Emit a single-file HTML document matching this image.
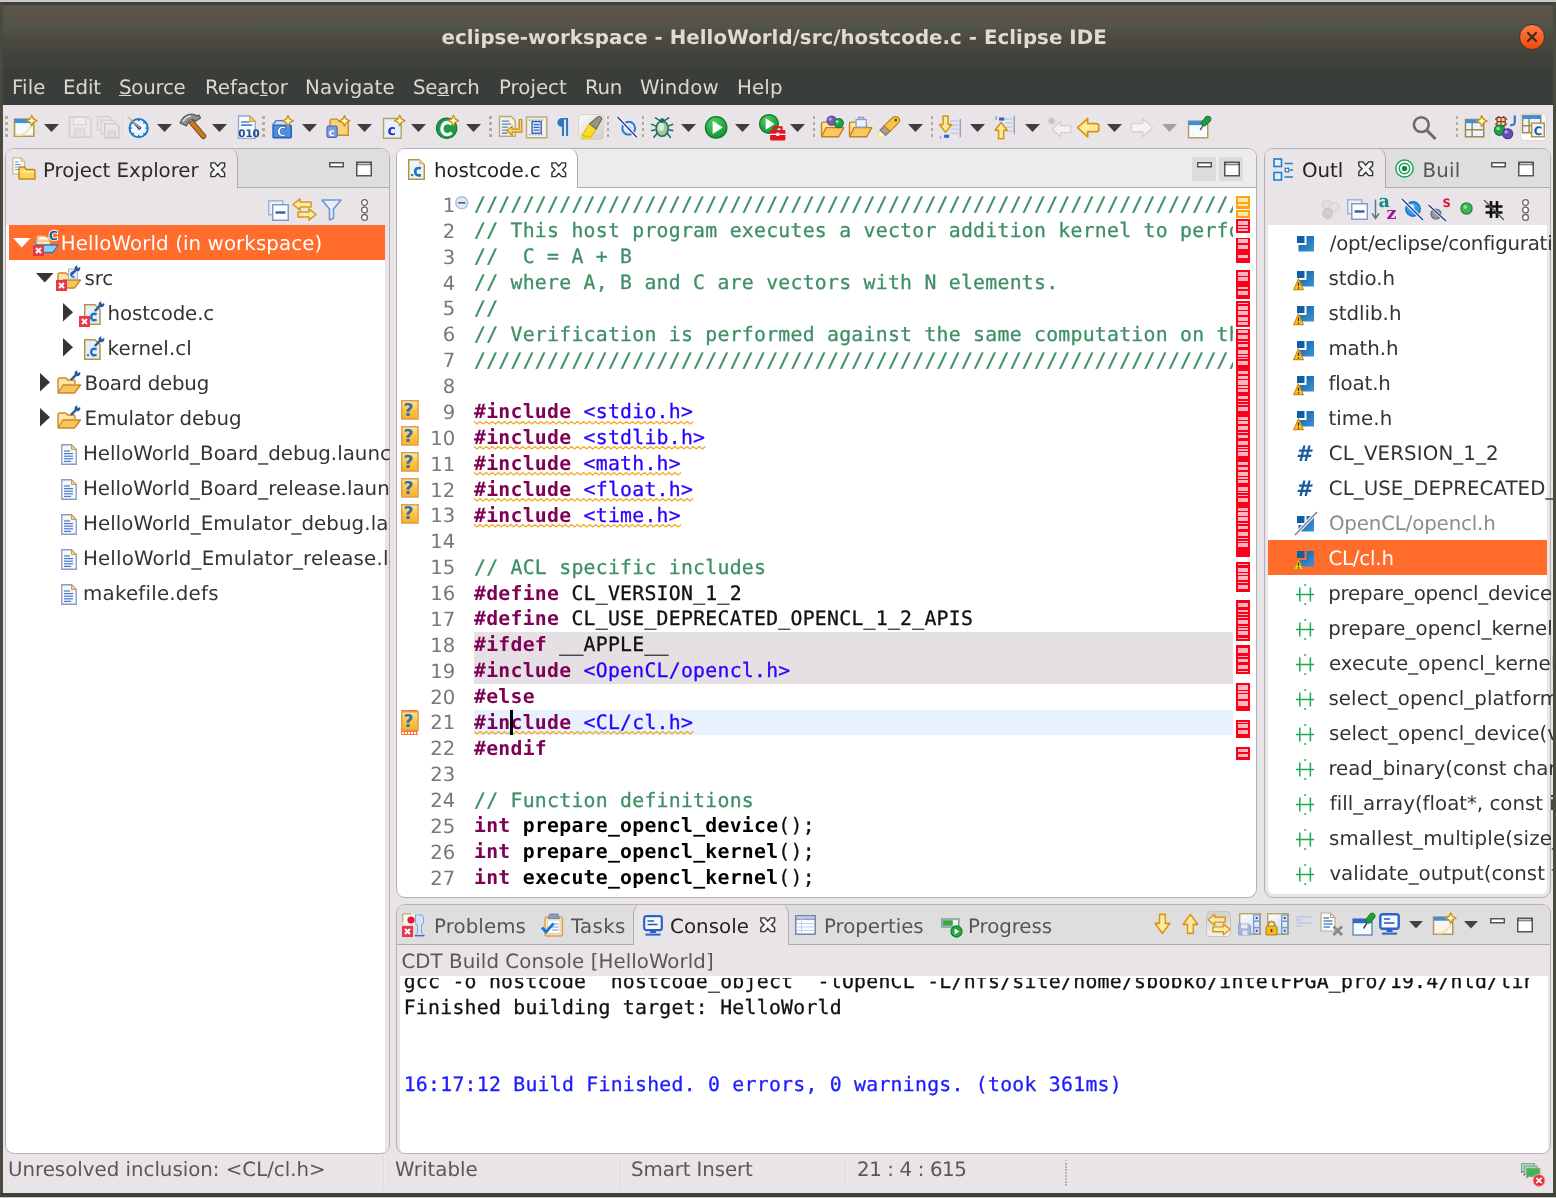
<!DOCTYPE html><html><head><meta charset='utf-8'><title>eclipse-workspace - HelloWorld/src/hostcode.c - Eclipse IDE</title><style>
*{box-sizing:border-box;margin:0;padding:0}
html,body{width:1556px;height:1198px;overflow:hidden;background:#e8e4e8;}
body{position:relative;-webkit-font-smoothing:antialiased;text-rendering:geometricPrecision;font-family:"DejaVu Sans","Liberation Sans",sans-serif;font-size:19.79px;color:#333;}
.abs{position:absolute}
.t{position:absolute;white-space:pre;line-height:1}
.mono{font-family:"DejaVu Sans Mono","Liberation Mono",monospace;font-size:19.79px;letter-spacing:0.264px;-webkit-text-stroke:0.3px currentColor}
.panel{position:absolute;border:1.5px solid #b4b0b4;border-radius:9px;background:#fff;overflow:hidden}
.hdr{position:absolute;left:0;top:0;right:0;border-bottom:1.5px solid #b4b0b4}
svg{position:absolute;overflow:visible}
</style></head><body><div id='root' style='position:absolute;left:0;top:0;width:1556px;height:1198px;will-change:transform;overflow:hidden'>
<div class='abs' style='left:0;top:0;width:1556px;height:2px;background:#c9c9c9'></div>
<div class='abs' style='left:0;top:1.7px;width:1556px;height:3px;background:#3e4136'></div>
<div class='abs' style='left:0;top:4.5px;width:1556px;height:62.5px;background:linear-gradient(#57564a 0%,#5a5347 18%,#51544b 35%,#4d4a42 52%,#464740 68%,#40413b 86%,#443f3a 100%)'></div>
<div class='t' style='left:441.55px;top:27.6px;font-weight:bold;color:#dfdbd2;font-size:19.79px;letter-spacing:0.036px'>eclipse-workspace - HelloWorld/src/hostcode.c - Eclipse IDE</div>
<div class='abs' style='left:1518.5px;top:23.5px;width:26px;height:26px;border-radius:50%;background:linear-gradient(#ff7a4a,#f14a08);border:1px solid #3a3a30'></div>
<svg style='left:1518.5px;top:23.5px' width='26' height='26' viewBox='0 0 26 26'><path d='M9 9 L17 17 M17 9 L9 17' stroke='#3a2a1a' stroke-width='2.2' stroke-linecap='round'/></svg>
<div class='abs' style='left:0;top:66.8px;width:1556px;height:38px;background:#393e3b'></div>
<div class='t' style='left:12px;top:78.3px;color:#dcd8d0;font-size:19.79px;letter-spacing:0.114px'>File</div>
<div class='t' style='left:63px;top:78.3px;color:#dcd8d0;font-size:19.79px;letter-spacing:-0.067px'>Edit</div>
<div class='t' style='left:119px;top:78.3px;color:#dcd8d0;font-size:19.79px;letter-spacing:-0.237px'><u>S</u>ource</div>
<div class='t' style='left:205px;top:78.3px;color:#dcd8d0;font-size:19.79px;letter-spacing:-0.022px'>Refac<u>t</u>or</div>
<div class='t' style='left:305px;top:78.3px;color:#dcd8d0;font-size:19.79px;letter-spacing:0.131px'>Navigate</div>
<div class='t' style='left:413px;top:78.3px;color:#dcd8d0;font-size:19.79px;letter-spacing:-0.240px'>Se<u>a</u>rch</div>
<div class='t' style='left:499px;top:78.3px;color:#dcd8d0;font-size:19.79px;letter-spacing:0.002px'>Project</div>
<div class='t' style='left:585px;top:78.3px;color:#dcd8d0;font-size:19.79px;letter-spacing:-0.259px'>Run</div>
<div class='t' style='left:640px;top:78.3px;color:#dcd8d0;font-size:19.79px;letter-spacing:0.116px'>Window</div>
<div class='t' style='left:737px;top:78.3px;color:#dcd8d0;font-size:19.79px;letter-spacing:0.138px'>Help</div>
<div class='abs' style='left:0;top:104.5px;width:1556px;height:1090px;background:#e8e4e8'></div>
<div class='abs' style='left:5.1px;top:115.5px;width:2.6px;height:23px;background:repeating-linear-gradient(#b3ab98 0 2.6px,transparent 2.6px 6.1px)'></div>
<svg style='left:13px;top:114.5px' width='24.3' height='24.3' viewBox='0 0 24 24' ><rect x='1.5' y='4' width='19' height='17' fill='#f4f9ff' stroke='#b9984a' stroke-width='1.5'/><rect x='1.5' y='4' width='19' height='4' fill='#3a8ee0'/><path d='M4 20 Q14 20 18 10' fill='none' stroke='#f5e3a8' stroke-width='2'/><path d='M18.5 0.2999999999999998 L20.164 3.836 L23.7 5.5 L20.164 7.164 L18.5 10.7 L16.836 7.164 L13.3 5.5 L16.836 3.836 Z' fill='#fff7d0' stroke='#c8940f' stroke-width='1.3' stroke-linejoin='round'/></svg>
<svg style='left:44px;top:123.5px' width='15' height='8' viewBox='0 0 15 8' ><path d='M0 0 H15 L7.5 8 Z' fill='#3f3f3f'/></svg>
<svg style='left:67.5px;top:114.5px' width='24.3' height='24.3' viewBox='0 0 24 24' ><path d='M1.5 2 H20 L22.5 4.5 V22 H1.5 Z' fill='#ebe6ea' stroke='#d4ccd2' stroke-width='1.4'/><rect x='5.5' y='2.5' width='12' height='7' fill='#f1edf0' stroke='#d8d0d6'/><rect x='6.5' y='14' width='10' height='8' fill='#e4dfe3' stroke='#d4ccd2'/></svg>
<svg style='left:95.5px;top:114.5px' width='24.3' height='24.3' viewBox='0 0 24 24' ><path d='M1.5 1.5 H13 L15 3.5 V15 H1.5 Z' fill='#ebe6ea' stroke='#d4ccd2' stroke-width='1.2'/><path d='M5 5 H16.5 L18.5 7 V18.5 H5 Z' fill='#ebe6ea' stroke='#d4ccd2' stroke-width='1.2'/><path d='M8.5 8.5 H20 L22.5 11 V22.5 H8.5 Z' fill='#ebe6ea' stroke='#d0c8ce' stroke-width='1.3'/><rect x='12' y='16' width='7' height='6.5' fill='#e2dce0' stroke='#d0c8ce'/></svg>
<div class='abs' style='left:121.5px;top:113px;width:1.3px;height:28px;background:#e1dbdc'></div>
<svg style='left:126px;top:114.5px' width='24.3' height='24.3' viewBox='0 0 24 24' ><circle cx='12.5' cy='13' r='9' fill='#f2f8ff' stroke='#1f7ac8' stroke-width='2'/><path d='M12.5 4 V6.5 M12.5 19.5 V22 M3.5 13 H6 M19 13 H21.5 M6 6.5 L7.8 8.3 M19 6.5 L17.2 8.3 M6 19.5 L7.8 17.7 M19 19.5 L17.2 17.7' stroke='#1f7ac8' stroke-width='1.4'/><path d='M2 2 L13 15 L15.5 12.5 Z' fill='#1d3f8c'/><path d='M2 2 L14 13' stroke='#e8c860' stroke-width='1'/></svg>
<svg style='left:157px;top:123.5px' width='15' height='8' viewBox='0 0 15 8' ><path d='M0 0 H15 L7.5 8 Z' fill='#3f3f3f'/></svg>
<svg style='left:178px;top:112px' width='29' height='29' viewBox='0 0 29 29' ><path d='M11 11 L24 26 Q26 27.5 27.5 25.5 Q28.5 24 27 22.5 L15 8 Z' fill='#c4782a' stroke='#8a4e14' stroke-width='1.1'/><path d='M2 11 Q5 3 13 2 Q17 2 19 4 L21 3 L22.5 6 L17 9.5 L15 7.5 Q12 7 10.5 10 L8.5 14 Z' fill='#8d8d8d' stroke='#555' stroke-width='1.1' stroke-linejoin='round'/><path d='M5 9.5 Q8 4.5 13 4' stroke='#d8d8d8' stroke-width='1.6' fill='none'/></svg>
<svg style='left:212px;top:123.5px' width='15' height='8' viewBox='0 0 15 8' ><path d='M0 0 H15 L7.5 8 Z' fill='#3f3f3f'/></svg>
<svg style='left:236px;top:114.5px' width='24.3' height='24.3' viewBox='0 0 24 24' ><path d='M2.5 1 H13.5 L19 6.5 V23 H2.5 Z' fill='#f6f9fe' stroke='#9ca9c6' stroke-width='1.3'/><path d='M13.5 1 V6.5 H19 Z' fill='#eed58c' stroke='#c8a040' stroke-width='1'/><path d='M5 7 H13 M5 10 H16' stroke='#5a84cc' stroke-width='1.5'/><text x='2.2' y='21.5' font-family='DejaVu Sans, Liberation Sans, sans-serif' font-weight='bold' font-size='10.2' fill='#1f4e96'>010</text></svg>
<div class='abs' style='left:262.3px;top:115.5px;width:2.6px;height:23px;background:repeating-linear-gradient(#b3ab98 0 2.6px,transparent 2.6px 6.1px)'></div>
<svg style='left:270px;top:114.5px' width='24.3' height='24.3' viewBox='0 0 24 24' ><path d='M2.5 10 L6 5.5 H16 L19.5 10' fill='#cfe0f8' stroke='#4a78c8' stroke-width='1.3'/><rect x='3' y='10' width='18' height='12.5' rx='1' fill='#4a8fe8' stroke='#2a5cb8' stroke-width='1.4'/><text x='7' y='20.8' font-family='DejaVu Sans, Liberation Sans, sans-serif' font-weight='bold' font-size='12.5' fill='#fff' stroke='#1d4a9a' stroke-width='0.5'>C</text><path d='M17.8 0.5999999999999996 L19.464000000000002 4.135999999999999 L23.0 5.8 L19.464000000000002 7.464 L17.8 11.0 L16.136 7.464 L12.600000000000001 5.8 L16.136 4.135999999999999 Z' fill='#fff7d0' stroke='#c8940f' stroke-width='1.3' stroke-linejoin='round'/></svg>
<svg style='left:302px;top:123.5px' width='15' height='8' viewBox='0 0 15 8' ><path d='M0 0 H15 L7.5 8 Z' fill='#3f3f3f'/></svg>
<svg style='left:325.5px;top:114.5px' width='24.3' height='24.3' viewBox='0 0 24 24' ><path d='M4 20 V6 Q4 4 6 4 H11 L13 6.5 H20 Q22 6.5 22 8.5 V20 Z' fill='#f8d27a' stroke='#c88a2a' stroke-width='1.3'/><rect x='1' y='11' width='10' height='11' rx='1.5' fill='#7a9ee0' stroke='#4a6cb8' stroke-width='1.2'/><text x='2.8' y='20.3' font-family='DejaVu Sans, Liberation Sans, sans-serif' font-weight='bold' font-size='10' fill='#fff'>c</text><path d='M18.3 0.5999999999999996 L19.964000000000002 4.135999999999999 L23.5 5.8 L19.964000000000002 7.464 L18.3 11.0 L16.636 7.464 L13.100000000000001 5.8 L16.636 4.135999999999999 Z' fill='#fff7d0' stroke='#c8940f' stroke-width='1.3' stroke-linejoin='round'/></svg>
<svg style='left:357px;top:123.5px' width='15' height='8' viewBox='0 0 15 8' ><path d='M0 0 H15 L7.5 8 Z' fill='#3f3f3f'/></svg>
<svg style='left:381.5px;top:114.5px' width='24.3' height='24.3' viewBox='0 0 24 24' ><path d='M1.5 3.5 H19 V23 H1.5 Z' fill='#e8effc' stroke='#b8a060' stroke-width='1.4'/><text x='5.5' y='19.5' font-family='DejaVu Sans, Liberation Sans, sans-serif' font-weight='bold' font-size='14' fill='#2a35c0'>c</text><path d='M17.5 0.2999999999999998 L19.164 3.836 L22.7 5.5 L19.164 7.164 L17.5 10.7 L15.836 7.164 L12.3 5.5 L15.836 3.836 Z' fill='#fff7d0' stroke='#c8940f' stroke-width='1.3' stroke-linejoin='round'/></svg>
<svg style='left:411px;top:123.5px' width='15' height='8' viewBox='0 0 15 8' ><path d='M0 0 H15 L7.5 8 Z' fill='#3f3f3f'/></svg>
<svg style='left:434.5px;top:114.5px' width='24.3' height='24.3' viewBox='0 0 24 24' ><circle cx='11.5' cy='13' r='10' fill='#1f9a4a' stroke='#0f7a34' stroke-width='1.2'/><path d='M16.5 9 Q11 5.5 7.8 10 Q5.5 14.5 8.5 18 Q12 21 16.5 17.5' fill='none' stroke='#fff' stroke-width='3.2'/><path d='M18.2 0.2999999999999998 L19.864 3.836 L23.4 5.5 L19.864 7.164 L18.2 10.7 L16.535999999999998 7.164 L13.0 5.5 L16.535999999999998 3.836 Z' fill='#fff7d0' stroke='#c8940f' stroke-width='1.3' stroke-linejoin='round'/></svg>
<svg style='left:466px;top:123.5px' width='15' height='8' viewBox='0 0 15 8' ><path d='M0 0 H15 L7.5 8 Z' fill='#3f3f3f'/></svg>
<div class='abs' style='left:489.40000000000003px;top:115.5px;width:2.6px;height:23px;background:repeating-linear-gradient(#b3ab98 0 2.6px,transparent 2.6px 6.1px)'></div>
<svg style='left:497.5px;top:114.5px' width='24.3' height='24.3' viewBox='0 0 24 24' ><path d='M1.5 1.5 H13 L17 5.5 V21 H1.5 Z' fill='#f4f2e6' stroke='#b8a878' stroke-width='1.3'/><path d='M4 6 H11 M4 9 H13 M4 12 H10 M4 15 H9 M4 18 H9' stroke='#5a84cc' stroke-width='1.3'/><path d='M21 4.5 V14 H14 V11 L8.5 15.5 L14 20 V17 H23.5 V4.5 Z' fill='#f9d66a' stroke='#c88a1a' stroke-width='1.2' stroke-linejoin='round'/></svg>
<svg style='left:524.5px;top:114.5px' width='24.3' height='24.3' viewBox='0 0 24 24' ><rect x='1.5' y='2' width='20' height='20.5' fill='#f4f2e6' stroke='#b8a878' stroke-width='1.4'/><path d='M4 5 H19 M4 19.5 H19' stroke='#5a84cc' stroke-width='1.2' stroke-dasharray='1.5 1.5'/><rect x='7' y='6.5' width='9' height='11.5' fill='#dfe9fb' stroke='#3a64c0' stroke-width='1.4'/><path d='M8.5 9.5 H14.5 M8.5 12.2 H14.5 M8.5 15 H14.5' stroke='#3a64c0' stroke-width='1.3'/></svg>
<div class='t' style='left:556px;top:117px;font-size:22px;font-weight:bold;color:#2f77c8'>&#182;</div>
<div class='abs' style='left:577.5px;top:113.5px;width:26px;height:26.5px;border-radius:4px;background:linear-gradient(135deg,#fbfaf8,#d2cec6);border:1px solid #d8d4cc'></div>
<svg style='left:578.5px;top:114.5px' width='24.3' height='24.3' viewBox='0 0 24 24' ><path d='M3 20.5 L10 9 L17 14 L12 21.5 Z' fill='#f8e02a' stroke='#d4b800' stroke-width='1'/><path d='M2 22.5 H13' stroke='#f2d800' stroke-width='2'/><path d='M10.5 8.5 L19 1.5 Q22 1 22.5 4 L17 14 Z' fill='#9a9484' stroke='#6e6a5c' stroke-width='1'/></svg>
<div class='abs' style='left:606.5999999999999px;top:115.5px;width:2.6px;height:23px;background:repeating-linear-gradient(#b3ab98 0 2.6px,transparent 2.6px 6.1px)'></div>
<svg style='left:614.5px;top:114.5px' width='24.3' height='24.3' viewBox='0 0 24 24' ><circle cx='13.5' cy='13' r='6.3' fill='#dcecfb' stroke='#2a7cc8' stroke-width='2'/><circle cx='13.5' cy='13' r='2.2' fill='#5aa4e4'/><path d='M2.5 2 L21.5 22' stroke='#fff' stroke-width='3.4'/><path d='M2.5 2 L21.5 22' stroke='#3440a8' stroke-width='1.6'/></svg>
<div class='abs' style='left:641.5999999999999px;top:115.5px;width:2.6px;height:23px;background:repeating-linear-gradient(#b3ab98 0 2.6px,transparent 2.6px 6.1px)'></div>
<svg style='left:649.5px;top:114.5px' width='24.3' height='24.3' viewBox='0 0 24 24' ><path d='M12 7 L5 2.5 M12 7 L19 2.5 M6 11 L1 9 M18 11 L23 9 M5.5 14.5 L1 15.5 M18.5 14.5 L23 15.5 M7 18 L3.5 22.5 M17 18 L20.5 22.5' stroke='#1c6a64' stroke-width='1.5'/><ellipse cx='12' cy='13.5' rx='6' ry='7.5' fill='#9cc8a0' stroke='#1c6a64' stroke-width='1.5'/><ellipse cx='11' cy='12' rx='3' ry='4' fill='#d8ecd4'/><circle cx='12' cy='5.5' r='2.4' fill='#1c6a64'/></svg>
<svg style='left:681px;top:123.5px' width='15' height='8' viewBox='0 0 15 8' ><path d='M0 0 H15 L7.5 8 Z' fill='#3f3f3f'/></svg>
<svg style='left:704px;top:114.5px' width='24.3' height='24.3' viewBox='0 0 24 24' ><defs><radialGradient id='rg' cx='0.4' cy='0.3' r='0.8'><stop offset='0' stop-color='#4fd06a'/><stop offset='1' stop-color='#0f8a2c'/></radialGradient></defs><circle cx='12' cy='12.3' r='10.6' fill='url(#rg)' stroke='#0f7a28' stroke-width='1.2'/><path d='M8.5 5.8 L18.5 12.3 L8.5 18.8 Z' fill='#fff'/></svg>
<svg style='left:735px;top:123.5px' width='15' height='8' viewBox='0 0 15 8' ><path d='M0 0 H15 L7.5 8 Z' fill='#3f3f3f'/></svg>
<svg style='left:757.5px;top:112.5px' width='26.3' height='26.3' viewBox='0 0 24 24' ><circle cx='10' cy='10' r='8.6' fill='url(#rg)' stroke='#0f7a28' stroke-width='1.1'/><path d='M7 4.8 L15 10 L7 15.2 Z' fill='#fff'/><rect x='11' y='15.5' width='14' height='9.5' rx='1' fill='#e8121c'/><path d='M14.5 15.5 V13 H21.5 V15.5' fill='none' stroke='#e8121c' stroke-width='1.8'/><path d='M11 19.5 H25' stroke='#fff' stroke-width='1.2'/><rect x='16.7' y='18' width='2.6' height='3' fill='#fff'/></svg>
<svg style='left:790px;top:123.5px' width='15' height='8' viewBox='0 0 15 8' ><path d='M0 0 H15 L7.5 8 Z' fill='#3f3f3f'/></svg>
<div class='abs' style='left:812.8px;top:115.5px;width:2.6px;height:23px;background:repeating-linear-gradient(#b3ab98 0 2.6px,transparent 2.6px 6.1px)'></div>
<svg style='left:820px;top:114.5px' width='24.3' height='24.3' viewBox='0 0 24 24' ><path d='M1.5 21 V8.5 Q1.5 7 3 7 H8 L10 9 H17 Q18.5 9 18.5 10.5 V12' fill='#fbe4a4' stroke='#c8821a' stroke-width='1.4'/><path d='M1.5 21.5 L6 12.5 H23.5 L18.5 21.5 Z' fill='#f9c862' stroke='#c8821a' stroke-width='1.4' stroke-linejoin='round'/><circle cx='11.5' cy='5.5' r='4.6' fill='#7a5cc0' stroke='#5a3ca0'/><circle cx='10' cy='4' r='1.6' fill='#b8a4e8'/><circle cx='18.5' cy='8' r='4.6' fill='#1fa04a' stroke='#0f7a34'/><circle cx='17' cy='6.5' r='1.6' fill='#8ae0a0'/></svg>
<svg style='left:847.5px;top:114.5px' width='24.3' height='24.3' viewBox='0 0 24 24' ><path d='M1.5 21 V8.5 Q1.5 7 3 7 H8 L10 9 H17 Q18.5 9 18.5 10.5 V12' fill='#fbe4a4' stroke='#c8821a' stroke-width='1.4'/><path d='M1.5 21.5 L6 12.5 H23.5 L18.5 21.5 Z' fill='#f9c862' stroke='#c8821a' stroke-width='1.4' stroke-linejoin='round'/><rect x='8' y='4.5' width='10' height='7.5' fill='#eef2fb' stroke='#8a9cc8' stroke-width='1.2'/><path d='M10.5 4.5 V2.5 H15.5 V4.5' fill='none' stroke='#8a9cc8' stroke-width='1.3'/></svg>
<svg style='left:875.5px;top:114.5px' width='24.3' height='24.3' viewBox='0 0 24 24' ><path d='M1 23 L4 15 L9.5 20 Z' fill='#fff8c8' stroke='#f0e08a' stroke-width='1'/><path d='M4 15 L8 10.5 L14 16 L9.5 20 Z' fill='#a8a098' stroke='#78706a' stroke-width='1'/><path d='M8 10.5 L17 2 Q21 0.5 23 3.5 Q24 6 22 8 L14 16 Z' fill='#f8c44a' stroke='#c8860f' stroke-width='1.2'/><circle cx='19.5' cy='5' r='1.5' fill='#7a5a10'/></svg>
<svg style='left:907.5px;top:123.5px' width='15' height='8' viewBox='0 0 15 8' ><path d='M0 0 H15 L7.5 8 Z' fill='#3f3f3f'/></svg>
<div class='abs' style='left:930.8px;top:115.5px;width:2.6px;height:23px;background:repeating-linear-gradient(#b3ab98 0 2.6px,transparent 2.6px 6.1px)'></div>
<svg style='left:938px;top:114.5px' width='24.3' height='24.3' viewBox='0 0 24 24' ><path d='M12 6 H20 M13 10 H20 M13 14 H20 M12 18 H20' stroke='#c0cce8' stroke-width='1.5'/><path d='M22 4 V22' stroke='#8a9cc0' stroke-width='1.3'/><rect x='6' y='19.5' width='5' height='3' fill='#2a64c0'/><path d='M2.5 21 V23.5' stroke='#8a9cc0' stroke-width='1.2'/><path d='M5 1 H10 V9.5 H13.5 L7.5 17 L1.5 9.5 H5 Z' fill='#ffe9a0' stroke='#d8940f' stroke-width='1.5' stroke-linejoin='round'/></svg>
<svg style='left:970px;top:123.5px' width='15' height='8' viewBox='0 0 15 8' ><path d='M0 0 H15 L7.5 8 Z' fill='#3f3f3f'/></svg>
<svg style='left:993px;top:114.5px' width='24.3' height='24.3' viewBox='0 0 24 24' ><path d='M11 4 H19 M12 8 H19 M12 12 H19 M11 16 H19' stroke='#c0cce8' stroke-width='1.5'/><path d='M21 1 V19 M3 1 V5' stroke='#8a9cc0' stroke-width='1.3'/><rect x='6' y='2.5' width='5' height='3' fill='#2a64c0'/><path d='M5.5 23.5 H10.5 V15 H14 L8 7.5 L2 15 H5.5 Z' fill='#ffe9a0' stroke='#d8940f' stroke-width='1.5' stroke-linejoin='round'/></svg>
<svg style='left:1024.5px;top:123.5px' width='15' height='8' viewBox='0 0 15 8' ><path d='M0 0 H15 L7.5 8 Z' fill='#3f3f3f'/></svg>
<svg style='left:1046.5px;top:114.5px' width='24.3' height='24.3' viewBox='0 0 24 24' ><path d='M4.5 2 V10 M0.8 6 H8.2 M1.8 3.2 L7.2 8.8 M7.2 3.2 L1.8 8.8' stroke='#c4bec4' stroke-width='1.1'/><path d='M5 14 L13.5 6.5 V10.5 H23.5 V17.5 H13.5 V21.5 Z' fill='#f4f1f4' stroke='#d4cfd4' stroke-width='1.3' stroke-linejoin='round'/></svg>
<svg style='left:1075.5px;top:114.5px' width='24.3' height='24.3' viewBox='0 0 24 24' ><path d='M1.5 12.5 L11.5 3.5 V8.5 H20 Q22.5 8.5 22.5 11 V14 Q22.5 16.5 20 16.5 H11.5 V21.5 Z' fill='#ffeaa0' stroke='#d8940f' stroke-width='1.7' stroke-linejoin='round'/></svg>
<svg style='left:1106.7px;top:123.5px' width='15' height='8' viewBox='0 0 15 8' ><path d='M0 0 H15 L7.5 8 Z' fill='#3f3f3f'/></svg>
<svg style='left:1130px;top:114.5px' width='24.3' height='24.3' viewBox='0 0 24 24' ><path d='M22.5 12.5 L12.5 3.5 V8.5 H3 Q1.5 8.5 1.5 10 V15 Q1.5 16.5 3 16.5 H12.5 V21.5 Z' fill='#f6f3f6' stroke='#d6d1d6' stroke-width='1.4' stroke-linejoin='round'/></svg>
<svg style='left:1161.6px;top:123.5px' width='15' height='8' viewBox='0 0 15 8' ><path d='M0 0 H15 L7.5 8 Z' fill='#a5a09a'/></svg>
<svg style='left:1186.5px;top:114.5px' width='24.3' height='24.3' viewBox='0 0 24 24' ><rect x='1.5' y='6' width='19' height='16.5' fill='#f6fbff' stroke='#b09858' stroke-width='1.4'/><rect x='1.5' y='6' width='19' height='4' fill='#3a8ee0'/><path d='M13 15 L16 10' stroke='#555' stroke-width='1.4'/><path d='M14 8 L19 1.5 Q22 0.5 23.5 3 Q24 5 22.5 6.5 L17 11 Z' fill='#1fa03a' stroke='#0f7a24' stroke-width='1'/></svg>
<svg style='left:1410px;top:113px' width='30' height='30' viewBox='0 0 30 30' ><circle cx='11.3' cy='11.6' r='7.4' fill='none' stroke='#6c6c6c' stroke-width='2.6'/><path d='M16.8 17.2 L25.5 26' stroke='#6c6c6c' stroke-width='3' stroke-linecap='butt'/></svg>
<div class='abs' style='left:1455.8px;top:115.5px;width:2.6px;height:23px;background:repeating-linear-gradient(#b3ab98 0 2.6px,transparent 2.6px 6.1px)'></div>
<svg style='left:1464px;top:114.5px' width='24.3' height='24.3' viewBox='0 0 24 24' ><rect x='1.5' y='4.5' width='18' height='17' fill='#eaf4fe' stroke='#a08a4a' stroke-width='1.5'/><rect x='1.5' y='4.5' width='18' height='3.6' fill='#3a8ee0'/><path d='M8 8 V21.5 M1.5 14.5 H19.5' stroke='#a08a4a' stroke-width='1.5'/><path d='M17.5 0.5999999999999996 L19.228 4.272 L22.9 6 L19.228 7.728 L17.5 11.4 L15.772 7.728 L12.1 6 L15.772 4.272 Z' fill='#fff7d0' stroke='#c8940f' stroke-width='1.3' stroke-linejoin='round'/></svg>
<div class='abs' style='left:1489px;top:113px;width:1.3px;height:28px;background:#e1dbdc'></div>
<svg style='left:1492.5px;top:114.0px' width='24.3' height='24.3' viewBox='0 0 24 24' ><path d='M5.5 2 V13 M10.5 2 V13 M2 5 H14 M2 10 H14' stroke='#8a3a2a' stroke-width='1.4'/><rect x='4' y='3.5' width='8' height='8' fill='#f4d8a0' stroke='#8a3a2a' stroke-width='1.2'/><path d='M8 3.5 V11.5 M4 7.5 H12' stroke='#8a3a2a' stroke-width='1.1'/><path d='M21.5 1.5 V8 Q21.5 11.5 17 11' fill='none' stroke='#2a7cc8' stroke-width='2.2'/><circle cx='6.5' cy='16' r='5.2' fill='#1fa04a' stroke='#0f7a34'/><circle cx='5' cy='14.3' r='1.8' fill='#8ae0a0'/><circle cx='14.5' cy='19.5' r='5' fill='#6a4cb8' stroke='#4a2c98'/><circle cx='13' cy='17.8' r='1.7' fill='#b8a4e8'/></svg>
<div class='abs' style='left:1520px;top:112.5px;width:27px;height:28px;border-radius:5px;background:linear-gradient(#f8f6f8,#fff);border:1px solid #dcd6dc'></div>
<svg style='left:1521px;top:113.5px' width='24.3' height='24.3' viewBox='0 0 24 24' ><rect x='1.5' y='1.5' width='18' height='17' fill='#eaf4fe' stroke='#a08a4a' stroke-width='1.5'/><rect x='1.5' y='1.5' width='18' height='3.4' fill='#3a8ee0'/><path d='M8 5 V18.5 M1.5 11.5 H19.5' stroke='#a08a4a' stroke-width='1.5'/><rect x='10.5' y='9' width='12.5' height='13.5' fill='#f2f6fd' stroke='#b09040' stroke-width='1.4'/><text x='12.6' y='20.3' font-family='DejaVu Sans, Liberation Sans, sans-serif' font-weight='bold' font-size='11.5' fill='#1f5fa8'>C</text></svg>
<div class='panel' style='left:4.9px;top:148px;width:385.1px;height:1005.5px;background:#fff'>
<div class='abs' style='left:0;top:0;width:100%;height:39.2px;background:#dedede;border-bottom:1.5px solid #aeaaae'></div>
<div class='abs' style='left:-2px;top:-2px;width:234px;height:41.2px;background:#e8e4e8;border-right:1.5px solid #aeaaae;border-bottom-right-radius:0;border-top-right-radius:12px'></div>
<div class='abs' style='left:0;top:39.2px;width:100%;height:36.5px;background:#e8e4e8'></div>
<div class='abs' style='left:378.7px;top:75.7px;width:5px;height:940px;background:#e8e4e8'></div>
</div>
<div class='t' style='left:43.00px;top:161px;color:#2b2b2b;letter-spacing:-0.051px;font-size:19.79px;'>Project Explorer</div>
<svg style='left:210.2px;top:161.8px' width='15.5' height='15.5' viewBox='0 0 17 17' ><path d='M1 1 H5.4 L8.5 4.6 L11.6 1 H16 V5.2 L12.6 8.5 L16 11.8 V16 H11.6 L8.5 12.4 L5.4 16 H1 V11.8 L4.4 8.5 L1 5.2 Z' fill='#fff' fill-opacity='0.55' stroke='#333333' stroke-width='1.55' stroke-linejoin='miter'/></svg>
<svg style='left:329px;top:162px' width='15' height='6' viewBox='0 0 15 6' ><rect x='0.75' y='0.75' width='13.5' height='4' fill='#fff' stroke='#555' stroke-width='1.5'/></svg><svg style='left:356px;top:161px' width='16' height='16' viewBox='0 0 16 15' ><rect x='0.75' y='0.75' width='14.5' height='13.5' fill='#fff' stroke='#555' stroke-width='1.5'/><rect x='0.75' y='0.75' width='14.5' height='3' fill='#555'/><rect x='2' y='1.8' width='12' height='1' fill='#fff'/></svg>
<svg style='left:268px;top:199.5px' width='21' height='21' viewBox='0 0 21 21' ><rect x='0.75' y='0.75' width='14' height='14' fill='#e9f0fa' stroke='#9fb4d6' stroke-width='1.5'/><rect x='4.75' y='4.75' width='15.5' height='15.5' fill='#fff' stroke='#7f9ccb' stroke-width='1.5'/><path d='M7.5 12.5 H17.5' stroke='#2f5fae' stroke-width='2.4'/></svg>
<svg style='left:292px;top:197.5px' width='25' height='23' viewBox='0 0 25 23' ><path d='M1 6.5 L8 0.8 V4 H19 V9 H8 V12.2 Z' fill='#fbe9a6' stroke='#d49a1a' stroke-width='1.5' stroke-linejoin='round'/><path d='M24 16.5 L17 10.8 V14 H6 V19 H17 V22.2 Z' fill='#fbe9a6' stroke='#d49a1a' stroke-width='1.5' stroke-linejoin='round'/></svg>
<svg style='left:321px;top:199px' width='21' height='22' viewBox='0 0 21 22' ><path d='M1 1 H20 L12.5 10 V19 L8.5 21 V10 Z' fill='#e8f1fb' stroke='#6f97cf' stroke-width='1.6' stroke-linejoin='round'/></svg>
<svg style='left:359.5px;top:198.5px' width='9' height='22' viewBox='0 0 9 22' ><circle cx='4.5' cy='3.6' r='2.9' fill='#fff' stroke='#666' stroke-width='1.3'/><circle cx='4.5' cy='11' r='2.9' fill='#fff' stroke='#666' stroke-width='1.3'/><circle cx='4.5' cy='18.4' r='2.9' fill='#fff' stroke='#666' stroke-width='1.3'/></svg>
<div class='abs' style='left:7px;top:225.2px;width:383px;height:926px;overflow:hidden'>
<div class='abs' style='left:2px;top:0;width:376px;height:35.01px;background:#ff6c2c'></div>
<div class='t' style='left:53.86px;top:0.7px;color:#fff;letter-spacing:0.107px;font-size:19.79px;line-height:35.01px;'>HelloWorld (in workspace)</div>
<div class='t' style='left:77.60px;top:35.71px;color:#333333;letter-spacing:-0.135px;font-size:19.79px;line-height:35.01px;'>src</div>
<div class='t' style='left:100.60px;top:70.72px;color:#333333;letter-spacing:-0.106px;font-size:19.79px;line-height:35.01px;'>hostcode.c</div>
<div class='t' style='left:100.60px;top:105.73px;color:#333333;letter-spacing:0.066px;font-size:19.79px;line-height:35.01px;'>kernel.cl</div>
<div class='t' style='left:77.60px;top:140.73999999999998px;color:#333333;letter-spacing:-0.216px;font-size:19.79px;line-height:35.01px;'>Board debug</div>
<div class='t' style='left:77.60px;top:175.74999999999997px;color:#333333;letter-spacing:-0.132px;font-size:19.79px;line-height:35.01px;'>Emulator debug</div>
<div class='t' style='left:75.96px;top:210.76px;color:#333333;letter-spacing:0.034px;font-size:19.79px;line-height:35.01px;'>HelloWorld_Board_debug.launch</div>
<div class='t' style='left:75.96px;top:245.76999999999998px;color:#333333;letter-spacing:0.033px;font-size:19.79px;line-height:35.01px;'>HelloWorld_Board_release.launch</div>
<div class='t' style='left:75.96px;top:280.78px;color:#333333;letter-spacing:0.096px;font-size:19.79px;line-height:35.01px;'>HelloWorld_Emulator_debug.launch</div>
<div class='t' style='left:75.96px;top:315.78999999999996px;color:#333333;letter-spacing:0.179px;font-size:19.79px;line-height:35.01px;'>HelloWorld_Emulator_release.launch</div>
<div class='t' style='left:76.10px;top:350.79999999999995px;color:#333333;letter-spacing:0.224px;font-size:19.79px;line-height:35.01px;'>makefile.defs</div>
</div>
<svg style='left:12.5px;top:238.2px' width='17.5' height='9.5' viewBox='0 0 17.5 9.5' ><path d='M0 0 H17.5 L8.75 9.5 Z' fill='#fff'/></svg>
<svg style='left:33px;top:232.2px' width='26' height='22' viewBox='0 0 26 22' ><path d='M4 9 V5.5 Q4 4 5.5 4 H12 L13.5 5.5 H16 V9' fill='#fbe7ae' stroke='#d9b66a' stroke-width='1.2'/><rect x='7' y='5.5' width='7' height='1.5' fill='#fff'/><path d='M2 9 H17 V13 H2 Z' fill='#fbe7ae' stroke='#d9b66a' stroke-width='1'/><path d='M3 13 H25 L20 20.5 H7 Z' fill='#8fd0f7' stroke='#3d6fc0' stroke-width='1.3' stroke-linejoin='round'/><path d='M2 9 L7 20' stroke='#3d6fc0' stroke-width='1.2'/></svg><div class='t' style='left:48.8px;top:230.39999999999998px;font-size:12.5px;font-weight:bold;color:#1c5a96;-webkit-text-stroke:1.8px #fff;paint-order:stroke fill'>C</div><svg style='left:33px;top:244.7px' width='11' height='11' viewBox='0 0 11 11' ><rect width='11' height='11' fill='#e8364f'/><path d='M3 3 L8 8 M8 3 L3 8' stroke='#fff' stroke-width='2'/></svg>
<svg style='left:35.5px;top:273.21px' width='17.5' height='9.5' viewBox='0 0 17.5 9.5' ><path d='M0 0 H17.5 L8.75 9.5 Z' fill='#353535'/></svg>
<svg style='left:57px;top:271.21px' width='24' height='18' viewBox='0 0 24 18' ><path d='M1 16.5 V4 Q1 2 3 2 H8.5 Q10 2 10.5 4 H15' fill='#fbe4a4' stroke='#c8882a' stroke-width='1.4'/><path d='M1 17 L6 9 H23.5 L17.5 17 Z' fill='#f6c55e' stroke='#c8882a' stroke-width='1.4' stroke-linejoin='round'/></svg><svg style='left:68px;top:268.21px' width='11' height='12' viewBox='0 0 11 12' ><rect x='0.5' y='1' width='9' height='10' fill='#e3eefb' stroke='#9db8dc' stroke-width='1'/><path d='M6.5 4 Q3 4 3 6.5 Q3 9 6.5 9' fill='none' stroke='#2b6cb0' stroke-width='1.6'/></svg><svg style='left:70.4px;top:264.81px' width='10.8' height='10.8' viewBox='0 0 13 13' ><path d='M1.8 11.2 L7.2 5.8' stroke='#2b5a9a' stroke-width='2.9' stroke-linecap='round'/><circle cx='9' cy='4' r='3.4' fill='#2b5a9a'/><rect x='9.1' y='-0.4' width='2.8' height='3.8' fill='#fff' transform='rotate(45 10.5 1.5)'/></svg><svg style='left:56px;top:280.21px' width='11' height='11' viewBox='0 0 11 11' ><rect width='11' height='11' fill='#e8364f'/><path d='M3 3 L8 8 M8 3 L3 8' stroke='#fff' stroke-width='2'/></svg>
<svg style='left:62.5px;top:303.21999999999997px' width='10' height='18.5' viewBox='0 0 10 18.5' ><path d='M0 0 L10 9.25 L0 18.5 Z' fill='#353535'/></svg>
<svg style='left:84px;top:304.21999999999997px' width='17' height='21' viewBox='0 0 17 21' ><path d='M0.75 0.75 H11 L16 5.5 V20.25 H0.75 Z' fill='#e6eefb' stroke='#b5963f' stroke-width='1.5'/><path d='M12.6 10.3 Q7.2 8.6 7.2 13 Q7.2 17.4 12.6 15.9' fill='none' stroke='#2473b5' stroke-width='2.5'/><rect x='3' y='15.2' width='2' height='2' fill='#2473b5'/></svg><svg style='left:93.6px;top:300.61999999999995px' width='10.8' height='10.8' viewBox='0 0 13 13' ><path d='M1.8 11.2 L7.2 5.8' stroke='#2b5a9a' stroke-width='2.9' stroke-linecap='round'/><circle cx='9' cy='4' r='3.4' fill='#2b5a9a'/><rect x='9.1' y='-0.4' width='2.8' height='3.8' fill='#fff' transform='rotate(45 10.5 1.5)'/></svg><svg style='left:79px;top:316.21999999999997px' width='11' height='11' viewBox='0 0 11 11' ><rect width='11' height='11' fill='#e8364f'/><path d='M3 3 L8 8 M8 3 L3 8' stroke='#fff' stroke-width='2'/></svg>
<svg style='left:62.5px;top:338.23px' width='10' height='18.5' viewBox='0 0 10 18.5' ><path d='M0 0 L10 9.25 L0 18.5 Z' fill='#353535'/></svg>
<svg style='left:84px;top:339.23px' width='17' height='21' viewBox='0 0 17 21' ><path d='M0.75 0.75 H11 L16 5.5 V20.25 H0.75 Z' fill='#e6eefb' stroke='#b5963f' stroke-width='1.5'/><path d='M12.6 10.3 Q7.2 8.6 7.2 13 Q7.2 17.4 12.6 15.9' fill='none' stroke='#2473b5' stroke-width='2.5'/><rect x='3' y='15.2' width='2' height='2' fill='#2473b5'/></svg><svg style='left:93.6px;top:335.63px' width='10.8' height='10.8' viewBox='0 0 13 13' ><path d='M1.8 11.2 L7.2 5.8' stroke='#2b5a9a' stroke-width='2.9' stroke-linecap='round'/><circle cx='9' cy='4' r='3.4' fill='#2b5a9a'/><rect x='9.1' y='-0.4' width='2.8' height='3.8' fill='#fff' transform='rotate(45 10.5 1.5)'/></svg>
<svg style='left:40px;top:373.24px' width='10' height='18.5' viewBox='0 0 10 18.5' ><path d='M0 0 L10 9.25 L0 18.5 Z' fill='#353535'/></svg>
<svg style='left:57px;top:376.24px' width='24' height='18' viewBox='0 0 24 18' ><path d='M1 16.5 V4 Q1 2 3 2 H8.5 Q10 2 10.5 4 H16.5 Q18 4 18 5.5 V8' fill='#fbe4a4' stroke='#c8882a' stroke-width='1.4'/><path d='M1 17 L6 9 H23.5 L17.5 17 Z' fill='#f6c55e' stroke='#c8882a' stroke-width='1.4' stroke-linejoin='round'/></svg><svg style='left:70.4px;top:369.84000000000003px' width='10.8' height='10.8' viewBox='0 0 13 13' ><path d='M1.8 11.2 L7.2 5.8' stroke='#2b5a9a' stroke-width='2.9' stroke-linecap='round'/><circle cx='9' cy='4' r='3.4' fill='#2b5a9a'/><rect x='9.1' y='-0.4' width='2.8' height='3.8' fill='#fff' transform='rotate(45 10.5 1.5)'/></svg>
<svg style='left:40px;top:408.25px' width='10' height='18.5' viewBox='0 0 10 18.5' ><path d='M0 0 L10 9.25 L0 18.5 Z' fill='#353535'/></svg>
<svg style='left:57px;top:411.25px' width='24' height='18' viewBox='0 0 24 18' ><path d='M1 16.5 V4 Q1 2 3 2 H8.5 Q10 2 10.5 4 H16.5 Q18 4 18 5.5 V8' fill='#fbe4a4' stroke='#c8882a' stroke-width='1.4'/><path d='M1 17 L6 9 H23.5 L17.5 17 Z' fill='#f6c55e' stroke='#c8882a' stroke-width='1.4' stroke-linejoin='round'/></svg><svg style='left:70.4px;top:404.85px' width='10.8' height='10.8' viewBox='0 0 13 13' ><path d='M1.8 11.2 L7.2 5.8' stroke='#2b5a9a' stroke-width='2.9' stroke-linecap='round'/><circle cx='9' cy='4' r='3.4' fill='#2b5a9a'/><rect x='9.1' y='-0.4' width='2.8' height='3.8' fill='#fff' transform='rotate(45 10.5 1.5)'/></svg>
<svg style='left:61.2px;top:444.26px' width='16' height='21' viewBox='0 0 16 21' ><path d='M0.75 0.75 H10.5 L15.25 5.5 V20.25 H0.75 Z' fill='#f4f7fd' stroke='#8c9cc0' stroke-width='1.3'/><path d='M10.5 0.75 V5.5 H15.25 Z' fill='#f2d68a' stroke='#c8a040' stroke-width='1'/><path d='M3 7 H9' stroke='#4a79c5' stroke-width='1.2'/><path d='M3 9.6 H12' stroke='#4a79c5' stroke-width='1.2'/><path d='M3 12.2 H12' stroke='#4a79c5' stroke-width='1.2'/><path d='M3 14.8 H12' stroke='#4a79c5' stroke-width='1.2'/><path d='M3 17.4 H10' stroke='#4a79c5' stroke-width='1.2'/></svg>
<svg style='left:61.2px;top:479.27px' width='16' height='21' viewBox='0 0 16 21' ><path d='M0.75 0.75 H10.5 L15.25 5.5 V20.25 H0.75 Z' fill='#f4f7fd' stroke='#8c9cc0' stroke-width='1.3'/><path d='M10.5 0.75 V5.5 H15.25 Z' fill='#f2d68a' stroke='#c8a040' stroke-width='1'/><path d='M3 7 H9' stroke='#4a79c5' stroke-width='1.2'/><path d='M3 9.6 H12' stroke='#4a79c5' stroke-width='1.2'/><path d='M3 12.2 H12' stroke='#4a79c5' stroke-width='1.2'/><path d='M3 14.8 H12' stroke='#4a79c5' stroke-width='1.2'/><path d='M3 17.4 H10' stroke='#4a79c5' stroke-width='1.2'/></svg>
<svg style='left:61.2px;top:514.28px' width='16' height='21' viewBox='0 0 16 21' ><path d='M0.75 0.75 H10.5 L15.25 5.5 V20.25 H0.75 Z' fill='#f4f7fd' stroke='#8c9cc0' stroke-width='1.3'/><path d='M10.5 0.75 V5.5 H15.25 Z' fill='#f2d68a' stroke='#c8a040' stroke-width='1'/><path d='M3 7 H9' stroke='#4a79c5' stroke-width='1.2'/><path d='M3 9.6 H12' stroke='#4a79c5' stroke-width='1.2'/><path d='M3 12.2 H12' stroke='#4a79c5' stroke-width='1.2'/><path d='M3 14.8 H12' stroke='#4a79c5' stroke-width='1.2'/><path d='M3 17.4 H10' stroke='#4a79c5' stroke-width='1.2'/></svg>
<svg style='left:61.2px;top:549.29px' width='16' height='21' viewBox='0 0 16 21' ><path d='M0.75 0.75 H10.5 L15.25 5.5 V20.25 H0.75 Z' fill='#f4f7fd' stroke='#8c9cc0' stroke-width='1.3'/><path d='M10.5 0.75 V5.5 H15.25 Z' fill='#f2d68a' stroke='#c8a040' stroke-width='1'/><path d='M3 7 H9' stroke='#4a79c5' stroke-width='1.2'/><path d='M3 9.6 H12' stroke='#4a79c5' stroke-width='1.2'/><path d='M3 12.2 H12' stroke='#4a79c5' stroke-width='1.2'/><path d='M3 14.8 H12' stroke='#4a79c5' stroke-width='1.2'/><path d='M3 17.4 H10' stroke='#4a79c5' stroke-width='1.2'/></svg>
<svg style='left:61.2px;top:584.3px' width='16' height='21' viewBox='0 0 16 21' ><path d='M0.75 0.75 H10.5 L15.25 5.5 V20.25 H0.75 Z' fill='#f4f7fd' stroke='#8c9cc0' stroke-width='1.3'/><path d='M10.5 0.75 V5.5 H15.25 Z' fill='#f2d68a' stroke='#c8a040' stroke-width='1'/><path d='M3 7 H9' stroke='#4a79c5' stroke-width='1.2'/><path d='M3 9.6 H12' stroke='#4a79c5' stroke-width='1.2'/><path d='M3 12.2 H12' stroke='#4a79c5' stroke-width='1.2'/><path d='M3 14.8 H12' stroke='#4a79c5' stroke-width='1.2'/><path d='M3 17.4 H10' stroke='#4a79c5' stroke-width='1.2'/></svg><svg style='left:12px;top:157px' width='24' height='23' viewBox='0 0 24 23' ><path d='M0.8 0.8 H9 L12.5 4.3 V17 H0.8 Z' fill='#fdfdf8' stroke='#c8b888' stroke-width='1.2'/><path d='M9 0.8 V4.3 H12.5' fill='#f0dca0' stroke='#c8b888' stroke-width='1'/><path d='M2.8 5 H7 M2.8 7.5 H9 M2.8 10 H9 M2.8 12.5 H7' stroke='#6a9ae0' stroke-width='1.2'/><path d='M7 22 V11.5 Q7 10 8.5 10 H12.5 L14.5 12.5 H21.5 Q23 12.5 23 14 V22 Z' fill='#fbd45c' stroke='#c8861a' stroke-width='1.4' stroke-linejoin='round'/><path d='M8.2 14.6 H22' stroke='#fdeeb0' stroke-width='1.4'/></svg>
<div class='panel' style='left:395.7px;top:148px;width:861.8px;height:750.2px;background:#fff'>
<div class='abs' style='left:0;top:0;width:100%;height:39.2px;background:#ececec;border-bottom:1.5px solid #aeaaae'></div>
<div class='abs' style='left:-2px;top:-2px;width:183px;height:41.2px;background:#fff;border-right:1.5px solid #aeaaae;border-top-right-radius:12px'></div>
<div class='abs' style='left:795.3px;top:7.5px;width:24px;height:24px;background:#dcdcdc'></div>
<div class='abs' style='left:822.7px;top:7.5px;width:24px;height:24px;background:#dcdcdc'></div>
</div>
<svg style='left:408px;top:158.5px' width='17' height='21' viewBox='0 0 17 21' ><path d='M0.75 0.75 H11 L16.25 5.5 V20.25 H0.75 Z' fill='#eef3fc' stroke='#b5963f' stroke-width='1.5'/><path d='M11 0.75 V5.5 H16.25 Z' fill='#e9c877'/><path d='M13 9.3 Q7.2 8 7.2 12.7 Q7.2 17.2 13 16.2' fill='none' stroke='#2473b5' stroke-width='2.7'/><rect x='3' y='15' width='2.2' height='2.2' fill='#2473b5'/></svg>
<div class='t' style='left:434.00px;top:161px;color:#222;letter-spacing:-0.106px;font-size:19.79px;'>hostcode.c</div>
<svg style='left:551.2px;top:161.8px' width='15.5' height='15.5' viewBox='0 0 17 17' ><path d='M1 1 H5.4 L8.5 4.6 L11.6 1 H16 V5.2 L12.6 8.5 L16 11.8 V16 H11.6 L8.5 12.4 L5.4 16 H1 V11.8 L4.4 8.5 L1 5.2 Z' fill='#fff' fill-opacity='0.55' stroke='#333333' stroke-width='1.55' stroke-linejoin='miter'/></svg>
<svg style='left:1196.7px;top:162px' width='15' height='6' viewBox='0 0 15 6' ><rect x='0.75' y='0.75' width='13.5' height='4' fill='#fff' stroke='#555' stroke-width='1.5'/></svg><svg style='left:1223.7px;top:161px' width='16' height='16' viewBox='0 0 16 15' ><rect x='0.75' y='0.75' width='14.5' height='13.5' fill='#fff' stroke='#555' stroke-width='1.5'/><rect x='0.75' y='0.75' width='14.5' height='3' fill='#555'/><rect x='2' y='1.8' width='12' height='1' fill='#fff'/></svg>
<div class='abs' style='left:474px;top:631.969px;width:759px;height:51.754px;background:#e4e0e4'></div>
<div class='abs' style='left:474px;top:709.5999999999999px;width:759px;height:25.877px;background:#e8f2fe'></div>
<div class='abs mono' style='left:474px;top:192.06px;width:758.5px;height:704.1400000000001px;overflow:hidden;white-space:pre'>
<div class='abs' style='left:0;top:0.4px;height:25.877px;line-height:25.877px'><span style='color:#3f8f66'>///////////////////////////////////////////////////////////////////////////</span></div>
<div class='abs' style='left:0;top:26.276999999999997px;height:25.877px;line-height:25.877px'><span style='color:#3f8f66'>// This host program executes a vector addition kernel to perform:</span></div>
<div class='abs' style='left:0;top:52.153999999999996px;height:25.877px;line-height:25.877px'><span style='color:#3f8f66'>//  C = A + B</span></div>
<div class='abs' style='left:0;top:78.031px;height:25.877px;line-height:25.877px'><span style='color:#3f8f66'>// where A, B and C are vectors with N elements.</span></div>
<div class='abs' style='left:0;top:103.908px;height:25.877px;line-height:25.877px'><span style='color:#3f8f66'>//</span></div>
<div class='abs' style='left:0;top:129.785px;height:25.877px;line-height:25.877px'><span style='color:#3f8f66'>// Verification is performed against the same computation on the host CPU.</span></div>
<div class='abs' style='left:0;top:155.662px;height:25.877px;line-height:25.877px'><span style='color:#3f8f66'>///////////////////////////////////////////////////////////////////////////</span></div>
<div class='abs' style='left:0;top:181.539px;height:25.877px;line-height:25.877px'></div>
<div class='abs' style='left:0;top:207.416px;height:25.877px;line-height:25.877px'><span style='color:#7f0055;font-weight:bold;-webkit-text-stroke:0'>#include</span><span style='color:#2a00ff'> &lt;stdio.h&gt;</span></div>
<div class='abs' style='left:0;top:233.293px;height:25.877px;line-height:25.877px'><span style='color:#7f0055;font-weight:bold;-webkit-text-stroke:0'>#include</span><span style='color:#2a00ff'> &lt;stdlib.h&gt;</span></div>
<div class='abs' style='left:0;top:259.16999999999996px;height:25.877px;line-height:25.877px'><span style='color:#7f0055;font-weight:bold;-webkit-text-stroke:0'>#include</span><span style='color:#2a00ff'> &lt;math.h&gt;</span></div>
<div class='abs' style='left:0;top:285.04699999999997px;height:25.877px;line-height:25.877px'><span style='color:#7f0055;font-weight:bold;-webkit-text-stroke:0'>#include</span><span style='color:#2a00ff'> &lt;float.h&gt;</span></div>
<div class='abs' style='left:0;top:310.924px;height:25.877px;line-height:25.877px'><span style='color:#7f0055;font-weight:bold;-webkit-text-stroke:0'>#include</span><span style='color:#2a00ff'> &lt;time.h&gt;</span></div>
<div class='abs' style='left:0;top:336.801px;height:25.877px;line-height:25.877px'></div>
<div class='abs' style='left:0;top:362.67799999999994px;height:25.877px;line-height:25.877px'><span style='color:#3f8f66'>// ACL specific includes</span></div>
<div class='abs' style='left:0;top:388.55499999999995px;height:25.877px;line-height:25.877px'><span style='color:#7f0055;font-weight:bold;-webkit-text-stroke:0'>#define</span><span style='color:#111'> CL_VERSION_1_2</span></div>
<div class='abs' style='left:0;top:414.43199999999996px;height:25.877px;line-height:25.877px'><span style='color:#7f0055;font-weight:bold;-webkit-text-stroke:0'>#define</span><span style='color:#111'> CL_USE_DEPRECATED_OPENCL_1_2_APIS</span></div>
<div class='abs' style='left:0;top:440.30899999999997px;height:25.877px;line-height:25.877px'><span style='color:#7f0055;font-weight:bold;-webkit-text-stroke:0'>#ifdef</span><span style='color:#111'> __APPLE__</span></div>
<div class='abs' style='left:0;top:466.186px;height:25.877px;line-height:25.877px'><span style='color:#7f0055;font-weight:bold;-webkit-text-stroke:0'>#include</span><span style='color:#2a00ff'> &lt;OpenCL/opencl.h&gt;</span></div>
<div class='abs' style='left:0;top:492.06299999999993px;height:25.877px;line-height:25.877px'><span style='color:#7f0055;font-weight:bold;-webkit-text-stroke:0'>#else</span></div>
<div class='abs' style='left:0;top:517.9399999999999px;height:25.877px;line-height:25.877px'><span style='color:#7f0055;font-weight:bold;-webkit-text-stroke:0'>#include</span><span style='color:#2a00ff'> &lt;CL/cl.h&gt;</span></div>
<div class='abs' style='left:0;top:543.817px;height:25.877px;line-height:25.877px'><span style='color:#7f0055;font-weight:bold;-webkit-text-stroke:0'>#endif</span></div>
<div class='abs' style='left:0;top:569.694px;height:25.877px;line-height:25.877px'></div>
<div class='abs' style='left:0;top:595.5709999999999px;height:25.877px;line-height:25.877px'><span style='color:#3f8f66'>// Function definitions</span></div>
<div class='abs' style='left:0;top:621.448px;height:25.877px;line-height:25.877px'><span style='color:#7f0055;font-weight:bold;-webkit-text-stroke:0'>int</span><span style='color:#111'> </span><span style='color:#000;font-weight:bold;-webkit-text-stroke:0'>prepare_opencl_device</span><span style='color:#111'>();</span></div>
<div class='abs' style='left:0;top:647.3249999999999px;height:25.877px;line-height:25.877px'><span style='color:#7f0055;font-weight:bold;-webkit-text-stroke:0'>int</span><span style='color:#111'> </span><span style='color:#000;font-weight:bold;-webkit-text-stroke:0'>prepare_opencl_kernel</span><span style='color:#111'>();</span></div>
<div class='abs' style='left:0;top:673.202px;height:25.877px;line-height:25.877px'><span style='color:#7f0055;font-weight:bold;-webkit-text-stroke:0'>int</span><span style='color:#111'> </span><span style='color:#000;font-weight:bold;-webkit-text-stroke:0'>execute_opencl_kernel</span><span style='color:#111'>();</span></div>
</div>
<div class='abs' style='left:420px;top:192.06px;width:35.3px;color:#787878;text-align:right;font-size:19.6px'>
<div class='abs' style='right:0;top:0.9px;height:25.877px;line-height:25.877px'>1</div>
<div class='abs' style='right:0;top:26.776999999999997px;height:25.877px;line-height:25.877px'>2</div>
<div class='abs' style='right:0;top:52.653999999999996px;height:25.877px;line-height:25.877px'>3</div>
<div class='abs' style='right:0;top:78.531px;height:25.877px;line-height:25.877px'>4</div>
<div class='abs' style='right:0;top:104.408px;height:25.877px;line-height:25.877px'>5</div>
<div class='abs' style='right:0;top:130.285px;height:25.877px;line-height:25.877px'>6</div>
<div class='abs' style='right:0;top:156.162px;height:25.877px;line-height:25.877px'>7</div>
<div class='abs' style='right:0;top:182.039px;height:25.877px;line-height:25.877px'>8</div>
<div class='abs' style='right:0;top:207.916px;height:25.877px;line-height:25.877px'>9</div>
<div class='abs' style='right:0;top:233.793px;height:25.877px;line-height:25.877px'>10</div>
<div class='abs' style='right:0;top:259.66999999999996px;height:25.877px;line-height:25.877px'>11</div>
<div class='abs' style='right:0;top:285.54699999999997px;height:25.877px;line-height:25.877px'>12</div>
<div class='abs' style='right:0;top:311.424px;height:25.877px;line-height:25.877px'>13</div>
<div class='abs' style='right:0;top:337.301px;height:25.877px;line-height:25.877px'>14</div>
<div class='abs' style='right:0;top:363.17799999999994px;height:25.877px;line-height:25.877px'>15</div>
<div class='abs' style='right:0;top:389.05499999999995px;height:25.877px;line-height:25.877px'>16</div>
<div class='abs' style='right:0;top:414.93199999999996px;height:25.877px;line-height:25.877px'>17</div>
<div class='abs' style='right:0;top:440.80899999999997px;height:25.877px;line-height:25.877px'>18</div>
<div class='abs' style='right:0;top:466.686px;height:25.877px;line-height:25.877px'>19</div>
<div class='abs' style='right:0;top:492.56299999999993px;height:25.877px;line-height:25.877px'>20</div>
<div class='abs' style='right:0;top:518.4399999999999px;height:25.877px;line-height:25.877px'>21</div>
<div class='abs' style='right:0;top:544.317px;height:25.877px;line-height:25.877px'>22</div>
<div class='abs' style='right:0;top:570.194px;height:25.877px;line-height:25.877px'>23</div>
<div class='abs' style='right:0;top:596.0709999999999px;height:25.877px;line-height:25.877px'>24</div>
<div class='abs' style='right:0;top:621.948px;height:25.877px;line-height:25.877px'>25</div>
<div class='abs' style='right:0;top:647.8249999999999px;height:25.877px;line-height:25.877px'>26</div>
<div class='abs' style='right:0;top:673.702px;height:25.877px;line-height:25.877px'>27</div>
</div>
<svg style='left:455.2px;top:196.4px' width='13.6' height='13.6' viewBox='0 0 13.6 13.6' ><circle cx='6.8' cy='6.8' r='6' fill='#e1ebf6' stroke='#aebdda' stroke-width='1.4'/><path d='M3.2 6.8 H10.4' stroke='#4a5a84' stroke-width='1.6'/></svg>
<svg style='left:474px;top:420.576px' width='219.204' height='4' viewBox='0 0 219.204 4' ><polyline points='0.00,0.6 3.04,3.0 6.09,0.6 9.13,3.0 12.18,0.6 15.22,3.0 18.26,0.6 21.31,3.0 24.35,0.6 27.40,3.0 30.44,0.6 33.48,3.0 36.53,0.6 39.57,3.0 42.62,0.6 45.66,3.0 48.70,0.6 51.75,3.0 54.79,0.6 57.84,3.0 60.88,0.6 63.92,3.0 66.97,0.6 70.01,3.0 73.06,0.6 76.10,3.0 79.14,0.6 82.19,3.0 85.23,0.6 88.28,3.0 91.32,0.6 94.36,3.0 97.41,0.6 100.45,3.0 103.50,0.6 106.54,3.0 109.58,0.6 112.63,3.0 115.67,0.6 118.72,3.0 121.76,0.6 124.80,3.0 127.85,0.6 130.89,3.0 133.94,0.6 136.98,3.0 140.02,0.6 143.07,3.0 146.11,0.6 149.16,3.0 152.20,0.6 155.24,3.0 158.29,0.6 161.33,3.0 164.38,0.6 167.42,3.0 170.46,0.6 173.51,3.0 176.55,0.6 179.60,3.0 182.64,0.6 185.68,3.0 188.73,0.6 191.77,3.0 194.82,0.6 197.86,3.0 200.90,0.6 203.95,3.0 206.99,0.6 210.04,3.0 213.08,0.6 216.12,3.0 219.17,0.6' fill='none' stroke='#f4a81c' stroke-width='1.3'/></svg>
<svg style='left:474px;top:446.453px' width='231.382' height='4' viewBox='0 0 231.382 4' ><polyline points='0.00,0.6 3.04,3.0 6.09,0.6 9.13,3.0 12.18,0.6 15.22,3.0 18.26,0.6 21.31,3.0 24.35,0.6 27.40,3.0 30.44,0.6 33.48,3.0 36.53,0.6 39.57,3.0 42.62,0.6 45.66,3.0 48.70,0.6 51.75,3.0 54.79,0.6 57.84,3.0 60.88,0.6 63.92,3.0 66.97,0.6 70.01,3.0 73.06,0.6 76.10,3.0 79.14,0.6 82.19,3.0 85.23,0.6 88.28,3.0 91.32,0.6 94.36,3.0 97.41,0.6 100.45,3.0 103.50,0.6 106.54,3.0 109.58,0.6 112.63,3.0 115.67,0.6 118.72,3.0 121.76,0.6 124.80,3.0 127.85,0.6 130.89,3.0 133.94,0.6 136.98,3.0 140.02,0.6 143.07,3.0 146.11,0.6 149.16,3.0 152.20,0.6 155.24,3.0 158.29,0.6 161.33,3.0 164.38,0.6 167.42,3.0 170.46,0.6 173.51,3.0 176.55,0.6 179.60,3.0 182.64,0.6 185.68,3.0 188.73,0.6 191.77,3.0 194.82,0.6 197.86,3.0 200.90,0.6 203.95,3.0 206.99,0.6 210.04,3.0 213.08,0.6 216.12,3.0 219.17,0.6 222.21,3.0 225.26,0.6 228.30,3.0 231.34,0.6' fill='none' stroke='#f4a81c' stroke-width='1.3'/></svg>
<svg style='left:474px;top:472.33px' width='207.026' height='4' viewBox='0 0 207.026 4' ><polyline points='0.00,0.6 3.04,3.0 6.09,0.6 9.13,3.0 12.18,0.6 15.22,3.0 18.26,0.6 21.31,3.0 24.35,0.6 27.40,3.0 30.44,0.6 33.48,3.0 36.53,0.6 39.57,3.0 42.62,0.6 45.66,3.0 48.70,0.6 51.75,3.0 54.79,0.6 57.84,3.0 60.88,0.6 63.92,3.0 66.97,0.6 70.01,3.0 73.06,0.6 76.10,3.0 79.14,0.6 82.19,3.0 85.23,0.6 88.28,3.0 91.32,0.6 94.36,3.0 97.41,0.6 100.45,3.0 103.50,0.6 106.54,3.0 109.58,0.6 112.63,3.0 115.67,0.6 118.72,3.0 121.76,0.6 124.80,3.0 127.85,0.6 130.89,3.0 133.94,0.6 136.98,3.0 140.02,0.6 143.07,3.0 146.11,0.6 149.16,3.0 152.20,0.6 155.24,3.0 158.29,0.6 161.33,3.0 164.38,0.6 167.42,3.0 170.46,0.6 173.51,3.0 176.55,0.6 179.60,3.0 182.64,0.6 185.68,3.0 188.73,0.6 191.77,3.0 194.82,0.6 197.86,3.0 200.90,0.6 203.95,3.0 206.99,0.6' fill='none' stroke='#f4a81c' stroke-width='1.3'/></svg>
<svg style='left:474px;top:498.207px' width='219.204' height='4' viewBox='0 0 219.204 4' ><polyline points='0.00,0.6 3.04,3.0 6.09,0.6 9.13,3.0 12.18,0.6 15.22,3.0 18.26,0.6 21.31,3.0 24.35,0.6 27.40,3.0 30.44,0.6 33.48,3.0 36.53,0.6 39.57,3.0 42.62,0.6 45.66,3.0 48.70,0.6 51.75,3.0 54.79,0.6 57.84,3.0 60.88,0.6 63.92,3.0 66.97,0.6 70.01,3.0 73.06,0.6 76.10,3.0 79.14,0.6 82.19,3.0 85.23,0.6 88.28,3.0 91.32,0.6 94.36,3.0 97.41,0.6 100.45,3.0 103.50,0.6 106.54,3.0 109.58,0.6 112.63,3.0 115.67,0.6 118.72,3.0 121.76,0.6 124.80,3.0 127.85,0.6 130.89,3.0 133.94,0.6 136.98,3.0 140.02,0.6 143.07,3.0 146.11,0.6 149.16,3.0 152.20,0.6 155.24,3.0 158.29,0.6 161.33,3.0 164.38,0.6 167.42,3.0 170.46,0.6 173.51,3.0 176.55,0.6 179.60,3.0 182.64,0.6 185.68,3.0 188.73,0.6 191.77,3.0 194.82,0.6 197.86,3.0 200.90,0.6 203.95,3.0 206.99,0.6 210.04,3.0 213.08,0.6 216.12,3.0 219.17,0.6' fill='none' stroke='#f4a81c' stroke-width='1.3'/></svg>
<svg style='left:474px;top:524.0840000000001px' width='207.026' height='4' viewBox='0 0 207.026 4' ><polyline points='0.00,0.6 3.04,3.0 6.09,0.6 9.13,3.0 12.18,0.6 15.22,3.0 18.26,0.6 21.31,3.0 24.35,0.6 27.40,3.0 30.44,0.6 33.48,3.0 36.53,0.6 39.57,3.0 42.62,0.6 45.66,3.0 48.70,0.6 51.75,3.0 54.79,0.6 57.84,3.0 60.88,0.6 63.92,3.0 66.97,0.6 70.01,3.0 73.06,0.6 76.10,3.0 79.14,0.6 82.19,3.0 85.23,0.6 88.28,3.0 91.32,0.6 94.36,3.0 97.41,0.6 100.45,3.0 103.50,0.6 106.54,3.0 109.58,0.6 112.63,3.0 115.67,0.6 118.72,3.0 121.76,0.6 124.80,3.0 127.85,0.6 130.89,3.0 133.94,0.6 136.98,3.0 140.02,0.6 143.07,3.0 146.11,0.6 149.16,3.0 152.20,0.6 155.24,3.0 158.29,0.6 161.33,3.0 164.38,0.6 167.42,3.0 170.46,0.6 173.51,3.0 176.55,0.6 179.60,3.0 182.64,0.6 185.68,3.0 188.73,0.6 191.77,3.0 194.82,0.6 197.86,3.0 200.90,0.6 203.95,3.0 206.99,0.6' fill='none' stroke='#f4a81c' stroke-width='1.3'/></svg>
<svg style='left:474px;top:731.0999999999999px' width='219.204' height='4' viewBox='0 0 219.204 4' ><polyline points='0.00,0.6 3.04,3.0 6.09,0.6 9.13,3.0 12.18,0.6 15.22,3.0 18.26,0.6 21.31,3.0 24.35,0.6 27.40,3.0 30.44,0.6 33.48,3.0 36.53,0.6 39.57,3.0 42.62,0.6 45.66,3.0 48.70,0.6 51.75,3.0 54.79,0.6 57.84,3.0 60.88,0.6 63.92,3.0 66.97,0.6 70.01,3.0 73.06,0.6 76.10,3.0 79.14,0.6 82.19,3.0 85.23,0.6 88.28,3.0 91.32,0.6 94.36,3.0 97.41,0.6 100.45,3.0 103.50,0.6 106.54,3.0 109.58,0.6 112.63,3.0 115.67,0.6 118.72,3.0 121.76,0.6 124.80,3.0 127.85,0.6 130.89,3.0 133.94,0.6 136.98,3.0 140.02,0.6 143.07,3.0 146.11,0.6 149.16,3.0 152.20,0.6 155.24,3.0 158.29,0.6 161.33,3.0 164.38,0.6 167.42,3.0 170.46,0.6 173.51,3.0 176.55,0.6 179.60,3.0 182.64,0.6 185.68,3.0 188.73,0.6 191.77,3.0 194.82,0.6 197.86,3.0 200.90,0.6 203.95,3.0 206.99,0.6 210.04,3.0 213.08,0.6 216.12,3.0 219.17,0.6' fill='none' stroke='#f4a81c' stroke-width='1.3'/></svg>
<svg style='left:400.6px;top:400.37600000000003px' width='17.8' height='19.8' viewBox='0 0 17.8 19.8' ><defs><linearGradient id='wq' x1='0' y1='0' x2='0' y2='1'><stop offset='0' stop-color='#ffe9a6'/><stop offset='0.45' stop-color='#fdc64a'/><stop offset='1' stop-color='#fbb02a'/></linearGradient></defs><rect x='0.75' y='0.75' width='16.3' height='18.3' fill='url(#wq)' stroke='#dca04a' stroke-width='1.5'/></svg><div class='t' style='left:403.6px;top:402.97600000000006px;font-size:17.6px;font-weight:bold;color:#356fa8'>?</div>
<svg style='left:400.6px;top:426.253px' width='17.8' height='19.8' viewBox='0 0 17.8 19.8' ><defs><linearGradient id='wq' x1='0' y1='0' x2='0' y2='1'><stop offset='0' stop-color='#ffe9a6'/><stop offset='0.45' stop-color='#fdc64a'/><stop offset='1' stop-color='#fbb02a'/></linearGradient></defs><rect x='0.75' y='0.75' width='16.3' height='18.3' fill='url(#wq)' stroke='#dca04a' stroke-width='1.5'/></svg><div class='t' style='left:403.6px;top:428.853px;font-size:17.6px;font-weight:bold;color:#356fa8'>?</div>
<svg style='left:400.6px;top:452.13px' width='17.8' height='19.8' viewBox='0 0 17.8 19.8' ><defs><linearGradient id='wq' x1='0' y1='0' x2='0' y2='1'><stop offset='0' stop-color='#ffe9a6'/><stop offset='0.45' stop-color='#fdc64a'/><stop offset='1' stop-color='#fbb02a'/></linearGradient></defs><rect x='0.75' y='0.75' width='16.3' height='18.3' fill='url(#wq)' stroke='#dca04a' stroke-width='1.5'/></svg><div class='t' style='left:403.6px;top:454.73px;font-size:17.6px;font-weight:bold;color:#356fa8'>?</div>
<svg style='left:400.6px;top:478.007px' width='17.8' height='19.8' viewBox='0 0 17.8 19.8' ><defs><linearGradient id='wq' x1='0' y1='0' x2='0' y2='1'><stop offset='0' stop-color='#ffe9a6'/><stop offset='0.45' stop-color='#fdc64a'/><stop offset='1' stop-color='#fbb02a'/></linearGradient></defs><rect x='0.75' y='0.75' width='16.3' height='18.3' fill='url(#wq)' stroke='#dca04a' stroke-width='1.5'/></svg><div class='t' style='left:403.6px;top:480.607px;font-size:17.6px;font-weight:bold;color:#356fa8'>?</div>
<svg style='left:400.6px;top:503.884px' width='17.8' height='19.8' viewBox='0 0 17.8 19.8' ><defs><linearGradient id='wq' x1='0' y1='0' x2='0' y2='1'><stop offset='0' stop-color='#ffe9a6'/><stop offset='0.45' stop-color='#fdc64a'/><stop offset='1' stop-color='#fbb02a'/></linearGradient></defs><rect x='0.75' y='0.75' width='16.3' height='18.3' fill='url(#wq)' stroke='#dca04a' stroke-width='1.5'/></svg><div class='t' style='left:403.6px;top:506.48400000000004px;font-size:17.6px;font-weight:bold;color:#356fa8'>?</div>
<div class='abs' style='left:400.6px;top:709.5999999999999px;width:17.8px;height:25.8px;background:#ff7236'></div>
<svg style='left:400.6px;top:711.3999999999999px' width='17.8' height='19.8' viewBox='0 0 17.8 19.8' ><defs><linearGradient id='wq' x1='0' y1='0' x2='0' y2='1'><stop offset='0' stop-color='#ffe9a6'/><stop offset='0.45' stop-color='#fdc64a'/><stop offset='1' stop-color='#fbb02a'/></linearGradient></defs><rect x='0.75' y='0.75' width='16.3' height='18.3' fill='url(#wq)' stroke='#dca04a' stroke-width='1.5'/></svg><div class='t' style='left:403.6px;top:713.9999999999999px;font-size:17.6px;font-weight:bold;color:#356fa8'>?</div>
<div class='abs' style='left:402px;top:732.1999999999999px;width:15.5px;height:1.6px;background:repeating-linear-gradient(90deg,#fff 0 1.5px,transparent 1.5px 3.04px)'></div>
<div class='abs' style='left:510.034px;top:709.5999999999999px;width:2.7px;height:25.576999999999998px;background:#000'></div>
<div class='abs' style='left:1236px;top:196.3px;width:13.8px;height:12.5px;background:#fba60a;overflow:hidden'><div class='abs' style='left:1.8px;right:1.8px;top:1.8px;height:4.0px;background:#fde6b8'></div><div class='abs' style='left:1.8px;right:1.8px;top:7.3px;height:2.5px;background:#fde6b8'></div></div>
<div class='abs' style='left:1236px;top:210px;width:13.8px;height:7.599999999999994px;background:#fba60a;overflow:hidden'><div class='abs' style='left:1.8px;right:1.8px;top:1.8px;height:4.0px;background:#fde6b8'></div></div>
<div class='abs' style='left:1236px;top:219px;width:13.8px;height:14.199999999999989px;background:#fb0019;overflow:hidden'><div class='abs' style='left:1.8px;right:1.8px;top:1.8px;height:4.0px;background:#ffb4be'></div><div class='abs' style='left:1.8px;right:1.8px;top:7.3px;height:1.5px;background:#ffb4be'></div><div class='abs' style='left:1.8px;right:1.8px;top:10.3px;height:1.5px;background:#ffb4be'></div></div>
<div class='abs' style='left:1236px;top:237.6px;width:13.8px;height:25.400000000000006px;background:#fb0019;overflow:hidden'><div class='abs' style='left:1.8px;right:1.8px;top:1.8px;height:3.8px;background:#ffb4be'></div><div class='abs' style='left:1.8px;right:1.8px;top:7.1px;height:4.2px;background:#ffb4be'></div><div class='abs' style='left:1.8px;right:1.8px;top:17.8px;height:3.0px;background:#ffb4be'></div></div>
<div class='abs' style='left:1236px;top:269.6px;width:13.8px;height:29.899999999999977px;background:#fb0019;overflow:hidden'><div class='abs' style='left:1.8px;right:1.8px;top:2.5px;height:3.8px;background:#ffb4be'></div><div class='abs' style='left:1.8px;right:1.8px;top:7.8px;height:4.0px;background:#ffb4be'></div><div class='abs' style='left:1.8px;right:1.8px;top:17.8px;height:2.0px;background:#ffb4be'></div><div class='abs' style='left:1.8px;right:1.8px;top:21.8px;height:4.0px;background:#ffb4be'></div></div>
<div class='abs' style='left:1236px;top:301px;width:13.8px;height:26px;background:#fb0019;overflow:hidden'><div class='abs' style='left:1.8px;right:1.8px;top:1.5px;height:1.5px;background:#ffb4be'></div><div class='abs' style='left:1.8px;right:1.8px;top:4.5px;height:4.0px;background:#ffb4be'></div><div class='abs' style='left:1.8px;right:1.8px;top:10.0px;height:4.0px;background:#ffb4be'></div><div class='abs' style='left:1.8px;right:1.8px;top:15.5px;height:4.0px;background:#ffb4be'></div><div class='abs' style='left:1.8px;right:1.8px;top:21.0px;height:3.0px;background:#ffb4be'></div></div>
<div class='abs' style='left:1236px;top:328.5px;width:13.8px;height:228.20000000000005px;background:#fb0019;overflow:hidden'><div class='abs' style='left:1.8px;right:1.8px;top:1.5px;height:3.2px;background:#ffb4be'></div><div class='abs' style='left:1.8px;right:1.8px;top:6.2px;height:4.4px;background:#ffb4be'></div><div class='abs' style='left:1.8px;right:1.8px;top:12.1px;height:1.4px;background:#ffb4be'></div><div class='abs' style='left:1.8px;right:1.8px;top:15.0px;height:3.0px;background:#ffb4be'></div><div class='abs' style='left:1.8px;right:1.8px;top:21.5px;height:3.8px;background:#ffb4be'></div><div class='abs' style='left:1.8px;right:1.8px;top:26.8px;height:1.3px;background:#ffb4be'></div><div class='abs' style='left:1.8px;right:1.8px;top:29.6px;height:1.3px;background:#ffb4be'></div><div class='abs' style='left:1.8px;right:1.8px;top:32.4px;height:4.2px;background:#ffb4be'></div><div class='abs' style='left:1.8px;right:1.8px;top:42.6px;height:3.0px;background:#ffb4be'></div><div class='abs' style='left:1.8px;right:1.8px;top:47.1px;height:3.2px;background:#ffb4be'></div><div class='abs' style='left:1.8px;right:1.8px;top:51.8px;height:4.4px;background:#ffb4be'></div><div class='abs' style='left:1.8px;right:1.8px;top:57.7px;height:1.4px;background:#ffb4be'></div><div class='abs' style='left:1.8px;right:1.8px;top:60.6px;height:3.0px;background:#ffb4be'></div><div class='abs' style='left:1.8px;right:1.8px;top:67.1px;height:3.8px;background:#ffb4be'></div><div class='abs' style='left:1.8px;right:1.8px;top:72.4px;height:1.3px;background:#ffb4be'></div><div class='abs' style='left:1.8px;right:1.8px;top:75.2px;height:1.3px;background:#ffb4be'></div><div class='abs' style='left:1.8px;right:1.8px;top:78.0px;height:4.2px;background:#ffb4be'></div><div class='abs' style='left:1.8px;right:1.8px;top:88.2px;height:3.0px;background:#ffb4be'></div><div class='abs' style='left:1.8px;right:1.8px;top:92.7px;height:3.2px;background:#ffb4be'></div><div class='abs' style='left:1.8px;right:1.8px;top:97.4px;height:4.4px;background:#ffb4be'></div><div class='abs' style='left:1.8px;right:1.8px;top:103.3px;height:1.4px;background:#ffb4be'></div><div class='abs' style='left:1.8px;right:1.8px;top:106.2px;height:3.0px;background:#ffb4be'></div><div class='abs' style='left:1.8px;right:1.8px;top:112.7px;height:3.8px;background:#ffb4be'></div><div class='abs' style='left:1.8px;right:1.8px;top:118.0px;height:1.3px;background:#ffb4be'></div><div class='abs' style='left:1.8px;right:1.8px;top:120.8px;height:1.3px;background:#ffb4be'></div><div class='abs' style='left:1.8px;right:1.8px;top:123.6px;height:4.2px;background:#ffb4be'></div><div class='abs' style='left:1.8px;right:1.8px;top:133.8px;height:3.0px;background:#ffb4be'></div><div class='abs' style='left:1.8px;right:1.8px;top:138.3px;height:3.2px;background:#ffb4be'></div><div class='abs' style='left:1.8px;right:1.8px;top:143.0px;height:4.4px;background:#ffb4be'></div><div class='abs' style='left:1.8px;right:1.8px;top:148.9px;height:1.4px;background:#ffb4be'></div><div class='abs' style='left:1.8px;right:1.8px;top:151.8px;height:3.0px;background:#ffb4be'></div><div class='abs' style='left:1.8px;right:1.8px;top:158.3px;height:3.8px;background:#ffb4be'></div><div class='abs' style='left:1.8px;right:1.8px;top:163.6px;height:1.3px;background:#ffb4be'></div><div class='abs' style='left:1.8px;right:1.8px;top:166.4px;height:1.3px;background:#ffb4be'></div><div class='abs' style='left:1.8px;right:1.8px;top:169.2px;height:4.2px;background:#ffb4be'></div><div class='abs' style='left:1.8px;right:1.8px;top:179.4px;height:3.0px;background:#ffb4be'></div><div class='abs' style='left:1.8px;right:1.8px;top:183.9px;height:3.2px;background:#ffb4be'></div><div class='abs' style='left:1.8px;right:1.8px;top:188.6px;height:4.4px;background:#ffb4be'></div><div class='abs' style='left:1.8px;right:1.8px;top:194.5px;height:1.4px;background:#ffb4be'></div><div class='abs' style='left:1.8px;right:1.8px;top:197.4px;height:3.0px;background:#ffb4be'></div><div class='abs' style='left:1.8px;right:1.8px;top:203.9px;height:3.8px;background:#ffb4be'></div><div class='abs' style='left:1.8px;right:1.8px;top:209.2px;height:1.3px;background:#ffb4be'></div><div class='abs' style='left:1.8px;right:1.8px;top:212.0px;height:1.3px;background:#ffb4be'></div><div class='abs' style='left:1.8px;right:1.8px;top:214.8px;height:4.2px;background:#ffb4be'></div></div>
<div class='abs' style='left:1236px;top:562px;width:13.8px;height:29.799999999999955px;background:#fb0019;overflow:hidden'><div class='abs' style='left:1.8px;right:1.8px;top:1.5px;height:1.6px;background:#ffb4be'></div><div class='abs' style='left:1.8px;right:1.8px;top:5.6px;height:4.2px;background:#ffb4be'></div><div class='abs' style='left:1.8px;right:1.8px;top:11.3px;height:1.4px;background:#ffb4be'></div><div class='abs' style='left:1.8px;right:1.8px;top:14.2px;height:4.2px;background:#ffb4be'></div><div class='abs' style='left:1.8px;right:1.8px;top:19.9px;height:1.4px;background:#ffb4be'></div><div class='abs' style='left:1.8px;right:1.8px;top:22.8px;height:4.2px;background:#ffb4be'></div></div>
<div class='abs' style='left:1236px;top:600.3px;width:13.8px;height:40.40000000000009px;background:#fb0019;overflow:hidden'><div class='abs' style='left:1.8px;right:1.8px;top:3.0px;height:4.2px;background:#ffb4be'></div><div class='abs' style='left:1.8px;right:1.8px;top:10.2px;height:1.4px;background:#ffb4be'></div><div class='abs' style='left:1.8px;right:1.8px;top:13.6px;height:1.4px;background:#ffb4be'></div><div class='abs' style='left:1.8px;right:1.8px;top:16.5px;height:1.4px;background:#ffb4be'></div><div class='abs' style='left:1.8px;right:1.8px;top:19.4px;height:4.0px;background:#ffb4be'></div><div class='abs' style='left:1.8px;right:1.8px;top:25.4px;height:1.3px;background:#ffb4be'></div><div class='abs' style='left:1.8px;right:1.8px;top:28.2px;height:1.3px;background:#ffb4be'></div><div class='abs' style='left:1.8px;right:1.8px;top:31.0px;height:3.6px;background:#ffb4be'></div><div class='abs' style='left:1.8px;right:1.8px;top:37.6px;height:1.3px;background:#ffb4be'></div></div>
<div class='abs' style='left:1236px;top:645.4px;width:13.8px;height:28.700000000000045px;background:#fb0019;overflow:hidden'><div class='abs' style='left:1.8px;right:1.8px;top:3.0px;height:4.2px;background:#ffb4be'></div><div class='abs' style='left:1.8px;right:1.8px;top:10.2px;height:1.5px;background:#ffb4be'></div><div class='abs' style='left:1.8px;right:1.8px;top:13.2px;height:3.6px;background:#ffb4be'></div><div class='abs' style='left:1.8px;right:1.8px;top:19.3px;height:4.4px;background:#ffb4be'></div><div class='abs' style='left:1.8px;right:1.8px;top:25.5px;height:1.6px;background:#ffb4be'></div></div>
<div class='abs' style='left:1236px;top:683.2px;width:13.8px;height:27.59999999999991px;background:#fb0019;overflow:hidden'><div class='abs' style='left:1.8px;right:1.8px;top:2.0px;height:4.4px;background:#ffb4be'></div><div class='abs' style='left:1.8px;right:1.8px;top:7.9px;height:1.5px;background:#ffb4be'></div><div class='abs' style='left:1.8px;right:1.8px;top:11.2px;height:4.4px;background:#ffb4be'></div><div class='abs' style='left:1.8px;right:1.8px;top:18.2px;height:4.4px;background:#ffb4be'></div></div>
<div class='abs' style='left:1236px;top:719.8px;width:13.8px;height:18.100000000000023px;background:#fb0019;overflow:hidden'><div class='abs' style='left:1.8px;right:1.8px;top:1.8px;height:1.2px;background:#ffb4be'></div><div class='abs' style='left:1.8px;right:1.8px;top:4.5px;height:4.2px;background:#ffb4be'></div><div class='abs' style='left:1.8px;right:1.8px;top:10.5px;height:4.2px;background:#ffb4be'></div></div>
<div class='abs' style='left:1236px;top:747.3px;width:13.8px;height:12.300000000000068px;background:#fb0019;overflow:hidden'><div class='abs' style='left:1.8px;right:1.8px;top:1.8px;height:3.0px;background:#ffb4be'></div><div class='abs' style='left:1.8px;right:1.8px;top:6.3px;height:3.8px;background:#ffb4be'></div></div>
<div class='panel' style='left:1263.7px;top:148px;width:287.5px;height:750.2px;background:#e8e4e8'>
<div class='abs' style='left:0;top:0;width:100%;height:39.2px;background:#dedede;border-bottom:1.5px solid #aeaaae'></div>
<div class='abs' style='left:-2px;top:-2px;width:123px;height:41.2px;background:#e8e4e8;border-right:1.5px solid #aeaaae;border-top-right-radius:12px'></div>
<div class='abs' style='left:3px;top:76px;width:279px;height:668.5px;background:#fff;border-bottom-left-radius:6px;border-bottom-right-radius:6px'></div>
</div>
<svg style='left:1272.5px;top:158px' width='21' height='23' viewBox='0 0 21 23' ><rect x='1' y='1' width='7.5' height='7.5' fill='#dff0ff' stroke='#1c7fd0' stroke-width='1.6'/><rect x='1' y='14.5' width='7.5' height='7.5' fill='#dff0ff' stroke='#1c7fd0' stroke-width='1.6'/><path d='M11.5 5.5 H20 M11.5 19 H20 M17 12 H20' stroke='#1c7fd0' stroke-width='1.4'/><rect x='12.3' y='10.3' width='3.4' height='3.4' fill='#fff' stroke='#1c7fd0' stroke-width='1.3'/></svg>
<div class='t' style='left:1302.00px;top:161px;color:#222;letter-spacing:-0.069px;font-size:19.79px;'>Outl</div>
<svg style='left:1357.7px;top:161.4px' width='15.5' height='15.5' viewBox='0 0 17 17' ><path d='M1 1 H5.4 L8.5 4.6 L11.6 1 H16 V5.2 L12.6 8.5 L16 11.8 V16 H11.6 L8.5 12.4 L5.4 16 H1 V11.8 L4.4 8.5 L1 5.2 Z' fill='#fff' fill-opacity='0.55' stroke='#333333' stroke-width='1.55' stroke-linejoin='miter'/></svg>
<svg style='left:1395px;top:158.8px' width='19' height='19' viewBox='0 0 19 19' ><circle cx='9.5' cy='9.5' r='8.6' fill='#fff' stroke='#1fa05a' stroke-width='1.5'/><circle cx='9.5' cy='9.5' r='5.3' fill='#e6f6ea' stroke='#1fa05a' stroke-width='1.4'/><circle cx='9.5' cy='9.5' r='2.6' fill='#15803d'/></svg>
<div class='t' style='left:1422.50px;top:161px;color:#555;letter-spacing:0.235px;font-size:19.79px;'>Buil</div>
<svg style='left:1490.5px;top:162px' width='15' height='6' viewBox='0 0 15 6' ><rect x='0.75' y='0.75' width='13.5' height='4' fill='#fff' stroke='#555' stroke-width='1.5'/></svg><svg style='left:1517.5px;top:161px' width='16' height='16' viewBox='0 0 16 15' ><rect x='0.75' y='0.75' width='14.5' height='13.5' fill='#fff' stroke='#555' stroke-width='1.5'/><rect x='0.75' y='0.75' width='14.5' height='3' fill='#555'/><rect x='2' y='1.8' width='12' height='1' fill='#fff'/></svg>
<svg style='left:1320px;top:199px' width='20' height='21' viewBox='0 0 20 21' ><circle cx='6.5' cy='5.5' r='4.6' fill='#e0dde0' stroke='#d2ced2'/><circle cx='14.5' cy='8' r='4.6' fill='#e4e1e4' stroke='#d2ced2'/><circle cx='7.5' cy='14.5' r='5' fill='#d0cdd0' stroke='#c6c2c6'/></svg>
<svg style='left:1347px;top:199.3px' width='21' height='21' viewBox='0 0 21 21' ><rect x='0.75' y='0.75' width='14' height='14' fill='#e9f0fa' stroke='#9fb4d6' stroke-width='1.5'/><rect x='4.75' y='4.75' width='15.5' height='15.5' fill='#fff' stroke='#7f9ccb' stroke-width='1.5'/><path d='M7.5 12.5 H17.5' stroke='#2f5fae' stroke-width='2.4'/></svg>
<svg style='left:1371px;top:198px' width='26' height='23' viewBox='0 0 26 23' ><path d='M4.5 1.5 V20 M1 15.5 L4.5 20.5 L8 15.5' fill='none' stroke='#5a7896' stroke-width='1.5'/></svg>
<div class='t' style='left:1378.5px;top:194px;font-family:"DejaVu Serif","Liberation Serif",serif;font-weight:bold;font-size:17.5px;color:#118a7e'>a</div>
<div class='t' style='left:1386.5px;top:205.5px;font-family:"DejaVu Serif","Liberation Serif",serif;font-weight:bold;font-size:17.5px;color:#a0189a'>z</div>
<svg style='left:1400.5px;top:198px' width='23' height='23' viewBox='0 0 23 23' ><circle cx='12' cy='11' r='7.2' fill='#2f9be6' stroke='#1b6fbe' stroke-width='1.4'/><circle cx='10.5' cy='9' r='3' fill='#bfe3fb'/><path d='M1 1 L22 22' stroke='#fff' stroke-width='3.2'/><path d='M1 1 L22 22' stroke='#1b3f9a' stroke-width='1.5'/></svg>
<svg style='left:1428px;top:198px' width='23' height='24' viewBox='0 0 23 24' ><circle cx='8' cy='16' r='5' fill='#9a9a9a' stroke='#6a6a6a' stroke-width='1.2'/><path d='M0.5 7 L18 23' stroke='#fff' stroke-width='3'/><path d='M0.5 7 L18 23' stroke='#1b3f9a' stroke-width='1.5'/></svg>
<div class='t' style='left:1442.5px;top:197.5px;font-size:11.5px;font-weight:bold;color:#e0103a'>S</div>
<svg style='left:1459.5px;top:202px' width='13' height='13' viewBox='0 0 13 13' ><circle cx='6.5' cy='6.5' r='5.6' fill='#3fb455' stroke='#1e8a3a' stroke-width='1.2'/><circle cx='5.3' cy='5' r='2' fill='#8fe09a'/></svg>
<svg style='left:1482.5px;top:198.5px' width='22' height='22' viewBox='0 0 22 22' ><path d='M8 2 V19 M14 2 V19 M2.5 7.5 H19.5 M2.5 13.5 H19.5' stroke='#111' stroke-width='2.6'/><path d='M1 1 L21 21' stroke='#555' stroke-width='1.2'/></svg>
<svg style='left:1521.2px;top:198.5px' width='9' height='22' viewBox='0 0 9 22' ><circle cx='4.5' cy='3.6' r='2.9' fill='#fff' stroke='#666' stroke-width='1.3'/><circle cx='4.5' cy='11' r='2.9' fill='#fff' stroke='#666' stroke-width='1.3'/><circle cx='4.5' cy='18.4' r='2.9' fill='#fff' stroke='#666' stroke-width='1.3'/></svg>
<div class='abs' style='left:1268px;top:225.2px;width:278.6px;height:671.0px;overflow:hidden'>
<div class='abs' style='left:0;top:315.09px;width:100%;height:35.01px;background:#ff6c2c'></div>
</div>
<div class='abs' style='left:1268px;top:225.2px;width:284.70000000000005px;height:671.0px;overflow:hidden'>
<div class='t' style='left:61.70px;top:0.7px;color:#333333;letter-spacing:-0.222px;font-size:19.79px;line-height:35.01px;'>/opt/eclipse/configuration/org.eclipse.osgi</div>
<div class='t' style='left:60.40px;top:35.71px;color:#333333;letter-spacing:-0.013px;font-size:19.79px;line-height:35.01px;'>stdio.h</div>
<div class='t' style='left:60.40px;top:70.72px;color:#333333;letter-spacing:0.006px;font-size:19.79px;line-height:35.01px;'>stdlib.h</div>
<div class='t' style='left:60.40px;top:105.73px;color:#333333;letter-spacing:-0.086px;font-size:19.79px;line-height:35.01px;'>math.h</div>
<div class='t' style='left:60.40px;top:140.73999999999998px;color:#333333;letter-spacing:-0.126px;font-size:19.79px;line-height:35.01px;'>float.h</div>
<div class='t' style='left:60.40px;top:175.74999999999997px;color:#333333;letter-spacing:0.065px;font-size:19.79px;line-height:35.01px;'>time.h</div>
<div class='t' style='left:60.79px;top:210.76px;color:#333333;letter-spacing:0.131px;font-size:19.79px;line-height:35.01px;'>CL_VERSION_1_2</div>
<div class='t' style='left:60.79px;top:245.76999999999998px;color:#333333;letter-spacing:0.057px;font-size:19.79px;line-height:35.01px;'>CL_USE_DEPRECATED_OPENCL_1_2_APIS</div>
<div class='t' style='left:60.89px;top:280.78px;color:#8c8c8c;letter-spacing:-0.141px;font-size:19.79px;line-height:35.01px;'>OpenCL/opencl.h</div>
<div class='t' style='left:60.40px;top:315.78999999999996px;color:#fff;letter-spacing:-0.181px;font-size:19.79px;line-height:35.01px;'>CL/cl.h</div>
<div class='t' style='left:60.20px;top:350.79999999999995px;color:#333333;letter-spacing:-0.176px;font-size:19.79px;line-height:35.01px;'>prepare_opencl_device() : int</div>
<div class='t' style='left:60.20px;top:385.80999999999995px;color:#333333;letter-spacing:0.058px;font-size:19.79px;line-height:35.01px;'>prepare_opencl_kernel() : int</div>
<div class='t' style='left:60.91px;top:420.82px;color:#333333;letter-spacing:0.131px;font-size:19.79px;line-height:35.01px;'>execute_opencl_kernel() : int</div>
<div class='t' style='left:60.40px;top:455.83px;color:#333333;letter-spacing:0.114px;font-size:19.79px;line-height:35.01px;'>select_opencl_platform(cl_platform_id*) : int</div>
<div class='t' style='left:60.93px;top:490.84px;color:#333333;letter-spacing:0.069px;font-size:19.79px;line-height:35.01px;'>select_opencl_device(void) : int</div>
<div class='t' style='left:60.40px;top:525.85px;color:#333333;letter-spacing:-0.010px;font-size:19.79px;line-height:35.01px;'>read_binary(const char*, size_t*) : char*</div>
<div class='t' style='left:61.75px;top:560.86px;color:#333333;letter-spacing:-0.008px;font-size:19.79px;line-height:35.01px;'>fill_array(float*, const int) : void</div>
<div class='t' style='left:60.93px;top:595.87px;color:#333333;letter-spacing:0.160px;font-size:19.79px;line-height:35.01px;'>smallest_multiple(size_t, size_t) : size_t</div>
<div class='t' style='left:61.41px;top:630.88px;color:#333333;letter-spacing:-0.019px;font-size:19.79px;line-height:35.01px;'>validate_output(const float*) : int</div>
</div>
<svg style='left:1297.2px;top:235.89999999999998px' width='17' height='15.5' viewBox='0 0 17 15.5' ><defs><linearGradient id='inc' x1='0' y1='0' x2='1' y2='1'><stop offset='0' stop-color='#0f5fa8'/><stop offset='1' stop-color='#3f93d2'/></linearGradient></defs><rect x='0' y='0' width='7.5' height='7' fill='#0f5fa8'/><path d='M9.5 0 H17 V15.5 H1.5 V9 H9.5 Z' fill='url(#inc)'/></svg>
<svg style='left:1297.2px;top:270.90999999999997px' width='17' height='15.5' viewBox='0 0 17 15.5' ><defs><linearGradient id='inc' x1='0' y1='0' x2='1' y2='1'><stop offset='0' stop-color='#0f5fa8'/><stop offset='1' stop-color='#3f93d2'/></linearGradient></defs><rect x='0' y='0' width='7.5' height='7' fill='#0f5fa8'/><path d='M9.5 0 H17 V15.5 H1.5 V9 H9.5 Z' fill='url(#inc)'/></svg><svg style='left:1292.5px;top:278.40999999999997px' width='11' height='12.6' viewBox='0 0 11.5 11' preserveAspectRatio='none'><path d='M5.75 0.8 L10.9 10.2 H0.6 Z' fill='#fbc02d' stroke='#c88a12' stroke-width='1.1' stroke-linejoin='round'/><path d='M5.75 4 V7' stroke='#4a3000' stroke-width='1.4'/><rect x='5.05' y='8' width='1.4' height='1.3' fill='#4a3000'/></svg>
<svg style='left:1297.2px;top:305.91999999999996px' width='17' height='15.5' viewBox='0 0 17 15.5' ><defs><linearGradient id='inc' x1='0' y1='0' x2='1' y2='1'><stop offset='0' stop-color='#0f5fa8'/><stop offset='1' stop-color='#3f93d2'/></linearGradient></defs><rect x='0' y='0' width='7.5' height='7' fill='#0f5fa8'/><path d='M9.5 0 H17 V15.5 H1.5 V9 H9.5 Z' fill='url(#inc)'/></svg><svg style='left:1292.5px;top:313.41999999999996px' width='11' height='12.6' viewBox='0 0 11.5 11' preserveAspectRatio='none'><path d='M5.75 0.8 L10.9 10.2 H0.6 Z' fill='#fbc02d' stroke='#c88a12' stroke-width='1.1' stroke-linejoin='round'/><path d='M5.75 4 V7' stroke='#4a3000' stroke-width='1.4'/><rect x='5.05' y='8' width='1.4' height='1.3' fill='#4a3000'/></svg>
<svg style='left:1297.2px;top:340.93px' width='17' height='15.5' viewBox='0 0 17 15.5' ><defs><linearGradient id='inc' x1='0' y1='0' x2='1' y2='1'><stop offset='0' stop-color='#0f5fa8'/><stop offset='1' stop-color='#3f93d2'/></linearGradient></defs><rect x='0' y='0' width='7.5' height='7' fill='#0f5fa8'/><path d='M9.5 0 H17 V15.5 H1.5 V9 H9.5 Z' fill='url(#inc)'/></svg><svg style='left:1292.5px;top:348.43px' width='11' height='12.6' viewBox='0 0 11.5 11' preserveAspectRatio='none'><path d='M5.75 0.8 L10.9 10.2 H0.6 Z' fill='#fbc02d' stroke='#c88a12' stroke-width='1.1' stroke-linejoin='round'/><path d='M5.75 4 V7' stroke='#4a3000' stroke-width='1.4'/><rect x='5.05' y='8' width='1.4' height='1.3' fill='#4a3000'/></svg>
<svg style='left:1297.2px;top:375.94px' width='17' height='15.5' viewBox='0 0 17 15.5' ><defs><linearGradient id='inc' x1='0' y1='0' x2='1' y2='1'><stop offset='0' stop-color='#0f5fa8'/><stop offset='1' stop-color='#3f93d2'/></linearGradient></defs><rect x='0' y='0' width='7.5' height='7' fill='#0f5fa8'/><path d='M9.5 0 H17 V15.5 H1.5 V9 H9.5 Z' fill='url(#inc)'/></svg><svg style='left:1292.5px;top:383.44px' width='11' height='12.6' viewBox='0 0 11.5 11' preserveAspectRatio='none'><path d='M5.75 0.8 L10.9 10.2 H0.6 Z' fill='#fbc02d' stroke='#c88a12' stroke-width='1.1' stroke-linejoin='round'/><path d='M5.75 4 V7' stroke='#4a3000' stroke-width='1.4'/><rect x='5.05' y='8' width='1.4' height='1.3' fill='#4a3000'/></svg>
<svg style='left:1297.2px;top:410.95px' width='17' height='15.5' viewBox='0 0 17 15.5' ><defs><linearGradient id='inc' x1='0' y1='0' x2='1' y2='1'><stop offset='0' stop-color='#0f5fa8'/><stop offset='1' stop-color='#3f93d2'/></linearGradient></defs><rect x='0' y='0' width='7.5' height='7' fill='#0f5fa8'/><path d='M9.5 0 H17 V15.5 H1.5 V9 H9.5 Z' fill='url(#inc)'/></svg><svg style='left:1292.5px;top:418.45px' width='11' height='12.6' viewBox='0 0 11.5 11' preserveAspectRatio='none'><path d='M5.75 0.8 L10.9 10.2 H0.6 Z' fill='#fbc02d' stroke='#c88a12' stroke-width='1.1' stroke-linejoin='round'/><path d='M5.75 4 V7' stroke='#4a3000' stroke-width='1.4'/><rect x='5.05' y='8' width='1.4' height='1.3' fill='#4a3000'/></svg>
<div class='t' style='left:1296px;top:443.86px;font-size:21.5px;font-weight:bold;font-style:italic;color:#1a5c9c'>#</div>
<div class='t' style='left:1296px;top:478.87px;font-size:21.5px;font-weight:bold;font-style:italic;color:#1a5c9c'>#</div>
<svg style='left:1297.2px;top:515.98px' width='17' height='15.5' viewBox='0 0 17 15.5' ><defs><linearGradient id='inc' x1='0' y1='0' x2='1' y2='1'><stop offset='0' stop-color='#0f5fa8'/><stop offset='1' stop-color='#3f93d2'/></linearGradient></defs><rect x='0' y='0' width='7.5' height='7' fill='#0f5fa8'/><path d='M9.5 0 H17 V15.5 H1.5 V9 H9.5 Z' fill='url(#inc)'/></svg><svg style='left:1294.2px;top:510.98px' width='24' height='25' viewBox='0 0 24 25' ><path d='M1 24 L23 1' stroke='#fff' stroke-width='3.4'/><path d='M1 24 L23 1' stroke='#7a7f9a' stroke-width='1.5'/></svg>
<svg style='left:1297.2px;top:550.99px' width='17' height='15.5' viewBox='0 0 17 15.5' ><defs><linearGradient id='inc' x1='0' y1='0' x2='1' y2='1'><stop offset='0' stop-color='#0f5fa8'/><stop offset='1' stop-color='#3f93d2'/></linearGradient></defs><rect x='0' y='0' width='7.5' height='7' fill='#0f5fa8'/><path d='M9.5 0 H17 V15.5 H1.5 V9 H9.5 Z' fill='url(#inc)'/></svg><svg style='left:1292.5px;top:558.49px' width='11' height='12.6' viewBox='0 0 11.5 11' preserveAspectRatio='none'><path d='M5.75 0.8 L10.9 10.2 H0.6 Z' fill='#fbc02d' stroke='#c88a12' stroke-width='1.1' stroke-linejoin='round'/><path d='M5.75 4 V7' stroke='#4a3000' stroke-width='1.4'/><rect x='5.05' y='8' width='1.4' height='1.3' fill='#4a3000'/></svg>
<svg style='left:1295.6px;top:584.1999999999999px' width='18.2' height='21' viewBox='0 0 18.2 21' ><path d='M3.8 3.5 V17.5 M14.4 3.5 V17.5 M0 10.5 H18.2' stroke='#1fa857' stroke-width='1.5'/><path d='M8.2 0.9 H10.2 M8.2 20.1 H10.2' stroke='#1fa857' stroke-width='1.5'/></svg>
<svg style='left:1295.6px;top:619.2099999999999px' width='18.2' height='21' viewBox='0 0 18.2 21' ><path d='M3.8 3.5 V17.5 M14.4 3.5 V17.5 M0 10.5 H18.2' stroke='#1fa857' stroke-width='1.5'/><path d='M8.2 0.9 H10.2 M8.2 20.1 H10.2' stroke='#1fa857' stroke-width='1.5'/></svg>
<svg style='left:1295.6px;top:654.2199999999999px' width='18.2' height='21' viewBox='0 0 18.2 21' ><path d='M3.8 3.5 V17.5 M14.4 3.5 V17.5 M0 10.5 H18.2' stroke='#1fa857' stroke-width='1.5'/><path d='M8.2 0.9 H10.2 M8.2 20.1 H10.2' stroke='#1fa857' stroke-width='1.5'/></svg>
<svg style='left:1295.6px;top:689.2299999999999px' width='18.2' height='21' viewBox='0 0 18.2 21' ><path d='M3.8 3.5 V17.5 M14.4 3.5 V17.5 M0 10.5 H18.2' stroke='#1fa857' stroke-width='1.5'/><path d='M8.2 0.9 H10.2 M8.2 20.1 H10.2' stroke='#1fa857' stroke-width='1.5'/></svg>
<svg style='left:1295.6px;top:724.2399999999999px' width='18.2' height='21' viewBox='0 0 18.2 21' ><path d='M3.8 3.5 V17.5 M14.4 3.5 V17.5 M0 10.5 H18.2' stroke='#1fa857' stroke-width='1.5'/><path d='M8.2 0.9 H10.2 M8.2 20.1 H10.2' stroke='#1fa857' stroke-width='1.5'/></svg>
<svg style='left:1295.6px;top:759.2499999999999px' width='18.2' height='21' viewBox='0 0 18.2 21' ><path d='M3.8 3.5 V17.5 M14.4 3.5 V17.5 M0 10.5 H18.2' stroke='#1fa857' stroke-width='1.5'/><path d='M8.2 0.9 H10.2 M8.2 20.1 H10.2' stroke='#1fa857' stroke-width='1.5'/></svg>
<svg style='left:1295.6px;top:794.2599999999999px' width='18.2' height='21' viewBox='0 0 18.2 21' ><path d='M3.8 3.5 V17.5 M14.4 3.5 V17.5 M0 10.5 H18.2' stroke='#1fa857' stroke-width='1.5'/><path d='M8.2 0.9 H10.2 M8.2 20.1 H10.2' stroke='#1fa857' stroke-width='1.5'/></svg>
<svg style='left:1295.6px;top:829.2699999999999px' width='18.2' height='21' viewBox='0 0 18.2 21' ><path d='M3.8 3.5 V17.5 M14.4 3.5 V17.5 M0 10.5 H18.2' stroke='#1fa857' stroke-width='1.5'/><path d='M8.2 0.9 H10.2 M8.2 20.1 H10.2' stroke='#1fa857' stroke-width='1.5'/></svg>
<svg style='left:1295.6px;top:864.2799999999999px' width='18.2' height='21' viewBox='0 0 18.2 21' ><path d='M3.8 3.5 V17.5 M14.4 3.5 V17.5 M0 10.5 H18.2' stroke='#1fa857' stroke-width='1.5'/><path d='M8.2 0.9 H10.2 M8.2 20.1 H10.2' stroke='#1fa857' stroke-width='1.5'/></svg>
<div class='panel' style='left:395.7px;top:904px;width:1155.5px;height:249.5px;background:#e8e4e8'>
<div class='abs' style='left:0;top:0;width:100%;height:40px;background:#dedede;border-bottom:1.5px solid #aeaaae'></div>
<div class='abs' style='left:236px;top:-2px;width:156px;height:42px;background:#e8e4e8;border-left:1.5px solid #aeaaae;border-right:1.5px solid #aeaaae;border-top-left-radius:11px;border-top-right-radius:11px'></div>
<div class='abs' style='left:3px;top:71px;width:1148px;height:178px;background:#fff;border-bottom-left-radius:6px;border-bottom-right-radius:6px'></div>
</div>
<div class='t' style='left:434.00px;top:917px;color:#555;letter-spacing:0.107px;font-size:19.79px;'>Problems</div>
<div class='t' style='left:571.00px;top:917px;color:#555;letter-spacing:0.310px;font-size:19.79px;'>Tasks</div>
<div class='t' style='left:670.00px;top:917px;color:#222;letter-spacing:0.086px;font-size:19.79px;'>Console</div>
<div class='t' style='left:824.00px;top:917px;color:#555;letter-spacing:-0.032px;font-size:19.79px;'>Properties</div>
<div class='t' style='left:968.00px;top:917px;color:#555;letter-spacing:-0.053px;font-size:19.79px;'>Progress</div>
<svg style='left:759.5px;top:917.4px' width='15.5' height='15.5' viewBox='0 0 17 17' ><path d='M1 1 H5.4 L8.5 4.6 L11.6 1 H16 V5.2 L12.6 8.5 L16 11.8 V16 H11.6 L8.5 12.4 L5.4 16 H1 V11.8 L4.4 8.5 L1 5.2 Z' fill='#fff' fill-opacity='0.55' stroke='#333333' stroke-width='1.55' stroke-linejoin='miter'/></svg>
<svg style='left:402px;top:913px' width='23' height='24' viewBox='0 0 23 24' ><path d='M1 9 V1 H9' fill='none' stroke='#b8a860' stroke-width='1.4'/><rect x='1.5' y='1.5' width='11' height='10' fill='#f8f8f4'/><circle cx='9' cy='7' r='3.6' fill='#f0102a'/><path d='M13.5 2 H19 Q21.5 2 21.5 5 V9 Q21.5 12 19.5 12 V20 L22 22.5 H13 L15.5 20 V12 Q13.5 12 13.5 9 Z' fill='#cfe4fa' stroke='#8aa4cc' stroke-width='1'/><path d='M13 22.7 H22.5' stroke='#4a6aa8' stroke-width='1.4'/></svg><svg style='left:402px;top:925.5px' width='11' height='11' viewBox='0 0 11 11' ><rect width='11' height='11' fill='#e8364f'/><path d='M3 3 L8 8 M8 3 L3 8' stroke='#fff' stroke-width='2'/></svg>
<svg style='left:540.5px;top:912.5px' width='23' height='24' viewBox='0 0 23 24' ><rect x='4' y='4' width='17.5' height='19' rx='2' fill='#f6e2b8' stroke='#d4a45a' stroke-width='1.4'/><rect x='6.5' y='7' width='12.5' height='13.5' fill='#fdfdfd' stroke='#d8c8a8' stroke-width='0.8'/><path d='M8.5 1 H17 L18.5 5.5 H7 Z' fill='#8a9cc0' stroke='#6a7ca8' stroke-width='0.8'/><path d='M11 11 H17.5 M11 14 H17.5 M11 17 H17.5' stroke='#7a9ad0' stroke-width='1.2'/><path d='M1 14.5 L5 19 L12.5 10.5' fill='none' stroke='#1878d8' stroke-width='2.8'/></svg>
<svg style='left:642.5px;top:914.5px' width='20' height='21' viewBox='0 0 20 21' ><rect x='1.2' y='1.2' width='17.6' height='14' rx='2.2' fill='#f4f8ff' stroke='#2a64c8' stroke-width='2.2'/><path d='M4.5 6 H11 M4.5 9.5 H14.5' stroke='#2a54b0' stroke-width='1.5'/><path d='M7 15.5 H13 V18 H7 Z' fill='#2a64c8'/><path d='M2.5 19.6 H17.5' stroke='#2a64c8' stroke-width='2'/></svg>
<svg style='left:795px;top:915px' width='21' height='20' viewBox='0 0 21 20' ><rect x='0.8' y='0.8' width='19.4' height='18.4' fill='#fbfcff' stroke='#6a7cac' stroke-width='1.4'/><rect x='0.8' y='0.8' width='19.4' height='3.4' fill='#c8d4ec' stroke='#6a7cac' stroke-width='1'/><path d='M6.5 4 V19 M1 8.5 H20 M1 12 H20 M1 15.5 H20' stroke='#c4cee4' stroke-width='1'/></svg>
<svg style='left:941px;top:915.5px' width='22' height='22' viewBox='0 0 22 22' ><rect x='0.8' y='3' width='17' height='8' fill='#e8f4e8' stroke='#6a8a8a' stroke-width='1.2'/><rect x='1.8' y='4.2' width='10' height='5.6' fill='#3aa84a'/><circle cx='15.5' cy='15.5' r='5.6' fill='#2aa845' stroke='#0f7a28' stroke-width='1.1'/><path d='M13.6 12.6 L18.2 15.5 L13.6 18.4 Z' fill='#fff'/></svg>
<svg style='left:1153.3px;top:913px' width='18.8' height='21.8' viewBox='0 0 23 23' preserveAspectRatio='none'><path d='M8 1.5 H15 V11 H20.5 L11.5 21.5 L2.5 11 H8 Z' fill='#fde9a0' stroke='#d8940f' stroke-width='1.7' stroke-linejoin='round'/></svg>
<svg style='left:1181.3px;top:913px' width='18.8' height='21.8' viewBox='0 0 23 23' preserveAspectRatio='none'><g transform='rotate(180 11.5 11.5)'><path d='M8 1.5 H15 V11 H20.5 L11.5 21.5 L2.5 11 H8 Z' fill='#fde9a0' stroke='#d8940f' stroke-width='1.7' stroke-linejoin='round'/></g></svg>
<div class='abs' style='left:1205.5px;top:911px;width:25.5px;height:26px;border-radius:4px;background:linear-gradient(#d4d0d0,#f2f0f0);border:1px solid #c8c4c4'></div>
<svg style='left:1206.5px;top:912.5px' width='24' height='23' viewBox='0 0 25 23' ><path d='M1 6.5 L8 0.8 V4 H19 V9 H8 V12.2 Z' fill='#fbe9a6' stroke='#d49a1a' stroke-width='1.5' stroke-linejoin='round'/><path d='M24 16.5 L17 10.8 V14 H6 V19 H17 V22.2 Z' fill='#fbe9a6' stroke='#d49a1a' stroke-width='1.5' stroke-linejoin='round'/></svg>
<svg style='left:1239px;top:913.2px' width='22' height='22' viewBox='0 0 22 22' ><defs><linearGradient id='fg' x1='0' y1='0' x2='0.6' y2='1'><stop offset='0' stop-color='#ffffff'/><stop offset='1' stop-color='#c4def6'/></linearGradient></defs><rect x='0.7' y='0.7' width='20.6' height='20.6' fill='url(#fg)' stroke='#b5a468' stroke-width='1.4'/><rect x='14' y='1.4' width='7.3' height='19.9' fill='#7f97c6'/><rect x='15.3' y='2.6' width='4.8' height='4.8' fill='#dfe8f8'/><rect x='15.3' y='9' width='4.8' height='4.8' fill='#dfe8f8'/><rect x='15.3' y='15.4' width='4.8' height='4.8' fill='#dfe8f8'/><rect x='16.7' y='4' width='2' height='2' fill='#2a4a9a'/><rect x='16.7' y='16.8' width='2' height='2' fill='#2a4a9a'/><path d='M-0.5 11 H9.5 L11.5 13 V22 H-0.5 Z' fill='#a8b4d4' stroke='#8a98c0' stroke-width='0.8'/><rect x='2' y='11.3' width='6.5' height='4' fill='#e8ecf6'/><rect x='3.5' y='17.5' width='5' height='4.5' fill='#dfe4f2'/></svg>
<svg style='left:1266.6px;top:913.2px' width='22' height='22' viewBox='0 0 22 22' ><defs><linearGradient id='fg' x1='0' y1='0' x2='0.6' y2='1'><stop offset='0' stop-color='#ffffff'/><stop offset='1' stop-color='#c4def6'/></linearGradient></defs><rect x='0.7' y='0.7' width='20.6' height='20.6' fill='url(#fg)' stroke='#b5a468' stroke-width='1.4'/><rect x='14' y='1.4' width='7.3' height='19.9' fill='#7f97c6'/><rect x='15.3' y='2.6' width='4.8' height='4.8' fill='#dfe8f8'/><rect x='15.3' y='9' width='4.8' height='4.8' fill='#dfe8f8'/><rect x='15.3' y='15.4' width='4.8' height='4.8' fill='#dfe8f8'/><rect x='16.7' y='4' width='2' height='2' fill='#2a4a9a'/><rect x='16.7' y='16.8' width='2' height='2' fill='#2a4a9a'/><rect x='-1' y='13' width='11' height='9' rx='1.5' fill='#f2b826' stroke='#b8820a' stroke-width='1.1'/><path d='M1.3 13 V11.5 Q1.3 8.6 4.5 8.6 Q7.7 8.6 7.7 11.5 V13' fill='none' stroke='#c8920f' stroke-width='1.8'/><rect x='3.6' y='16' width='1.8' height='3' fill='#6a4a00'/></svg>
<svg style='left:1295.5px;top:916px' width='17' height='11.5' viewBox='0 0 17 11.5' ><path d='M0 0.9 H16.5 M0 4 H6 M0 7 H16.5 M0 10.2 H6' stroke='#b9c6e6' stroke-width='1.5'/></svg>
<svg style='left:1320px;top:912px' width='24' height='24' viewBox='0 0 24 24' ><path d='M1 1 H10.5 L15 5.5 V19 H1 Z' fill='#fbfbf6' stroke='#b8b08a' stroke-width='1.2'/><path d='M10.5 1 V5.5 H15' fill='none' stroke='#b8b08a' stroke-width='1.1'/><path d='M3.5 6 H9 M3.5 9 H12.5 M3.5 12 H12.5 M3.5 15 H10' stroke='#5a84cc' stroke-width='1.4'/><path d='M13.5 14.5 L22 23 M22 14.5 L13.5 23' stroke='#8a8a8a' stroke-width='3'/></svg>
<svg style='left:1351.5px;top:911px' width='24' height='25' viewBox='0 0 24 25' ><rect x='1' y='8' width='19' height='16' fill='#f6fbff' stroke='#6a84b8' stroke-width='1.4'/><rect x='1' y='8' width='19' height='4.2' fill='#2a6cc8'/><path d='M11.5 17.5 L15 12' stroke='#444' stroke-width='1.4'/><path d='M13 9.5 L18.5 2.5 Q21.5 1 23 3.8 Q23.6 6 22 7.5 L16.5 12.5 Z' fill='#1fa03a' stroke='#0f7a24' stroke-width='1'/></svg>
<svg style='left:1379px;top:912.5px' width='21' height='22' viewBox='0 0 21 22' ><rect x='1.3' y='1.3' width='18.4' height='14.4' rx='2.2' fill='#f4f8ff' stroke='#2a64c8' stroke-width='2.4'/><path d='M5 6 H11 M5 10 H15.5' stroke='#2a54b0' stroke-width='1.5'/><path d='M7.5 16 H13.5 V19 H7.5 Z' fill='#2a64c8'/><path d='M3 20.6 H18' stroke='#2a64c8' stroke-width='2'/></svg>
<svg style='left:1409px;top:921px' width='14' height='7.5' viewBox='0 0 14 7.5' ><path d='M0 0 H14 L7 7.5 Z' fill='#444'/></svg>
<svg style='left:1432px;top:911.5px' width='24.3' height='24.3' viewBox='0 0 24 24' ><rect x='1.5' y='5' width='19' height='17' fill='#f8f6ee' stroke='#b09858' stroke-width='1.5'/><rect x='1.5' y='5' width='19' height='3.6' fill='#3a8ee0'/><path d='M5 21 Q15 21 19 11' fill='none' stroke='#f5e3a8' stroke-width='2'/><path d='M18.5 0.7999999999999998 L20.164 4.336 L23.7 6 L20.164 7.664 L18.5 11.2 L16.836 7.664 L13.3 6 L16.836 4.336 Z' fill='#fff7d0' stroke='#c8940f' stroke-width='1.3' stroke-linejoin='round'/></svg>
<svg style='left:1463.5px;top:921px' width='14' height='7.5' viewBox='0 0 14 7.5' ><path d='M0 0 H14 L7 7.5 Z' fill='#444'/></svg>
<svg style='left:1489.5px;top:918px' width='15' height='6' viewBox='0 0 15 6' ><rect x='0.75' y='0.75' width='13.5' height='4' fill='#fff' stroke='#555' stroke-width='1.5'/></svg><svg style='left:1516.5px;top:917px' width='16' height='16' viewBox='0 0 16 15' ><rect x='0.75' y='0.75' width='14.5' height='13.5' fill='#fff' stroke='#555' stroke-width='1.5'/><rect x='0.75' y='0.75' width='14.5' height='3' fill='#555'/><rect x='2' y='1.8' width='12' height='1' fill='#fff'/></svg>
<div class='t' style='left:401.40px;top:951.6px;color:#585858;letter-spacing:0.062px;font-size:19.79px;'>CDT Build Console [HelloWorld]</div>
<div class='abs mono' style='left:400px;top:978.3px;width:1128.5px;height:172px;overflow:hidden;white-space:pre'>
<div class='abs' style='left:3.7px;top:-9.489999999999942px;height:25.877px;line-height:25.877px;color:#111'>gcc -o hostcode  hostcode_object  -lOpenCL -L/nfs/site/home/sbobko/intelFPGA_pro/19.4/hld/lin</div>
<div class='abs' style='left:3.7px;top:16.387000000000057px;height:25.877px;line-height:25.877px;color:#111'>Finished building target: HelloWorld</div>
<div class='abs' style='left:3.7px;top:42.26400000000005px;height:25.877px;line-height:25.877px;color:#111'></div>
<div class='abs' style='left:3.7px;top:68.14100000000006px;height:25.877px;line-height:25.877px;color:#111'></div>
<div class='abs' style='left:3.7px;top:94.01800000000006px;height:25.877px;line-height:25.877px;color:#1c1cff'>16:17:12 Build Finished. 0 errors, 0 warnings. (took 361ms)</div>
</div>
<div class='t' style='left:8.00px;top:1159.7px;color:#585858;letter-spacing:-0.003px;font-size:19.79px;'>Unresolved inclusion: &lt;CL/cl.h&gt;</div>
<div class='t' style='left:395.00px;top:1159.7px;color:#585858;letter-spacing:0.050px;font-size:19.79px;'>Writable</div>
<div class='t' style='left:631.00px;top:1159.7px;color:#585858;letter-spacing:-0.094px;font-size:19.79px;'>Smart Insert</div>
<div class='t' style='left:857.00px;top:1159.7px;color:#585858;letter-spacing:-0.370px;font-size:19.79px;'>21 : 4 : 615</div>
<div class='abs' style='left:383px;top:1156px;width:2px;height:34px;background:linear-gradient(90deg,#d9d5d9,#f4f1f4)'></div>
<div class='abs' style='left:620px;top:1156px;width:2px;height:34px;background:linear-gradient(90deg,#d9d5d9,#f4f1f4)'></div>
<div class='abs' style='left:845px;top:1156px;width:2px;height:34px;background:linear-gradient(90deg,#d9d5d9,#f4f1f4)'></div>
<div class='abs' style='left:1065px;top:1160px;width:1.6px;height:27px;background:repeating-linear-gradient(#b9b2a2 0 1.5px,transparent 1.5px 3.04px)'></div>
<svg style='left:1520.5px;top:1162.5px' width='25' height='24' viewBox='0 0 25 24' ><rect x='0.6' y='0.6' width='13' height='8' fill='#a8e4c0' stroke='#8a9a8a' stroke-width='1'/><rect x='3.2' y='3' width='13' height='8' fill='#a0e0b8' stroke='#8a9a8a' stroke-width='1'/><rect x='5.8' y='5.4' width='13' height='8' fill='#3ab850' stroke='#8a9a8a' stroke-width='1'/><path d='M0.6 8.5 V10 M3.2 11 V12.5 M5.8 13.5 V15' stroke='#3a64a8' stroke-width='1.2'/><circle cx='18' cy='17.5' r='6' fill='#e8303c' stroke='#f4b0b4' stroke-width='1'/><path d='M15.3 14.8 L20.7 20.2 M20.7 14.8 L15.3 20.2' stroke='#fff' stroke-width='1.7'/></svg>
<div class='abs' style='left:0;top:2px;width:3px;height:1196px;background:#494b3f'></div>
<div class='abs' style='left:1553px;top:2px;width:3px;height:1196px;background:#494b3f'></div>
<div class='abs' style='left:0;top:1192.7px;width:1556px;height:4.3px;background:#3e4136'></div>
<div class='abs' style='left:0;top:1196.7px;width:1556px;height:2px;background:#c9c9c9'></div>
</div></body></html>
